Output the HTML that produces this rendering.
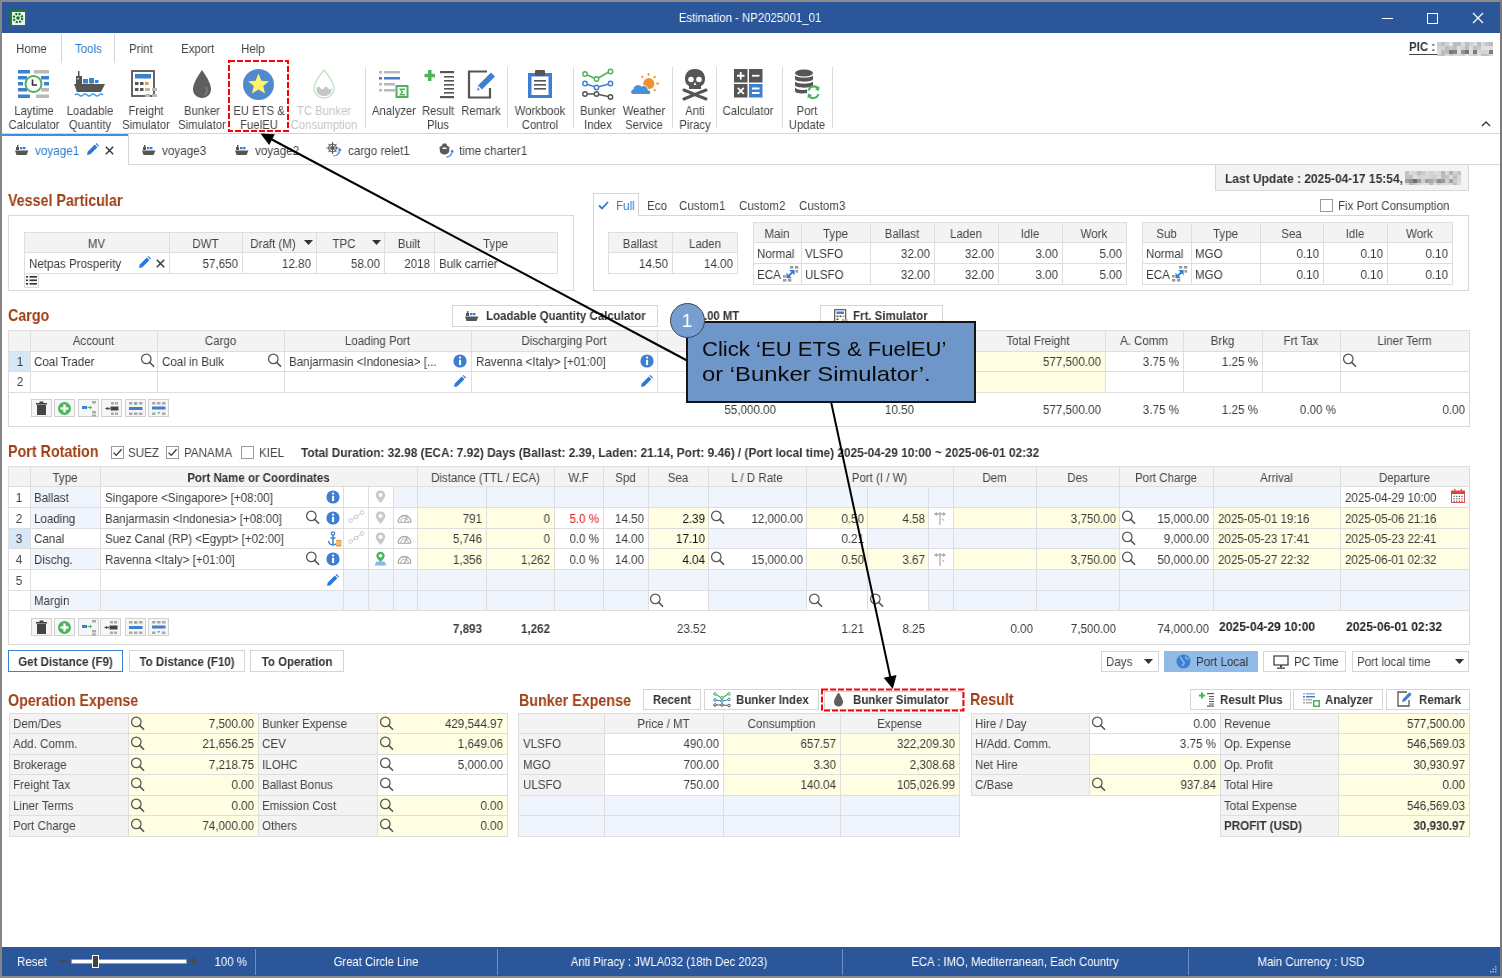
<!DOCTYPE html><html><head><meta charset="utf-8"><style>
html,body{margin:0;padding:0;width:1502px;height:978px;overflow:hidden;background:#fff;}
body{position:relative;font-family:"Liberation Sans", sans-serif;}
.a{position:absolute;}
.t{position:absolute;white-space:nowrap;will-change:transform;}
svg.a{overflow:visible;}
</style></head><body>
<div class="a" style="left:0px;top:0px;width:1502px;height:978px;background:#ffffff;"></div>
<div class="a" style="left:0px;top:0px;width:1502px;height:2px;background:#8c8c8c;"></div>
<div class="a" style="left:0px;top:0px;width:2px;height:978px;background:#858585;"></div>
<div class="a" style="left:1500px;top:0px;width:2px;height:978px;background:#7a7a7a;"></div>
<div class="a" style="left:0px;top:976px;width:1502px;height:2px;background:#8c8c8c;"></div>
<div class="a" style="left:2px;top:2px;width:1498px;height:31px;background:#2b579a;"></div>
<div class="a" style="left:10px;top:10px;width:16px;height:16px;background:#1f7a3a;border-radius:1px;"></div>
<div class="a" style="left:11.5px;top:11.5px;width:13px;height:13px;background:#e9f3ea;"></div>
<svg class="a" style="left:11px;top:11px;" width="14" height="14" viewBox="0 0 14 14"><circle cx="7" cy="7" r="4.2" fill="none" stroke="#146c2e" stroke-width="2.2" stroke-dasharray="2 1.3"/><circle cx="7" cy="7" r="1.8" fill="#146c2e"/></svg>
<div class="t" style="top:12.38px;font-size:12.54px;line-height:12.54px;color:#ffffff;left:600.0px;width:300px;text-align:center;transform-origin:50% 0;transform:scaleX(0.9091);">Estimation - NP2025001_01</div>
<div class="a" style="left:1382px;top:18px;width:11px;height:1px;background:#ffffff;"></div>
<div class="a" style="left:1427px;top:13px;width:11px;height:11px;border:1px solid #fff;box-sizing:border-box;"></div>
<svg class="a" style="left:1472px;top:12px;" width="12" height="12" viewBox="0 0 12 12"><path d="M1 1 L11 11 M11 1 L1 11" stroke="#fff" stroke-width="1.2"/></svg>
<div class="t" style="top:43.09px;font-size:12.65px;line-height:12.65px;color:#444;left:16px;transform-origin:0 0;transform:scaleX(0.9091);">Home</div>
<div class="a" style="left:61px;top:34px;width:1px;height:29px;background:#d6d6d6;"></div>
<div class="a" style="left:114px;top:34px;width:1px;height:29px;background:#d6d6d6;"></div>
<div class="t" style="top:43.09px;font-size:12.65px;line-height:12.65px;color:#2b7cd3;left:74.5px;transform-origin:0 0;transform:scaleX(0.9091);">Tools</div>
<div class="t" style="top:43.09px;font-size:12.65px;line-height:12.65px;color:#444;left:128.5px;transform-origin:0 0;transform:scaleX(0.9091);">Print</div>
<div class="t" style="top:43.09px;font-size:12.65px;line-height:12.65px;color:#444;left:180.5px;transform-origin:0 0;transform:scaleX(0.9091);">Export</div>
<div class="t" style="top:43.09px;font-size:12.65px;line-height:12.65px;color:#444;left:241px;transform-origin:0 0;transform:scaleX(0.9091);">Help</div>
<div class="t" style="top:41.29px;font-size:12.65px;line-height:12.65px;color:#333;font-weight:bold;left:1409px;transform-origin:0 0;transform:scaleX(0.9091);">PIC :</div>
<div class="a" style="left:1409px;top:54px;width:28px;height:1px;background:#444;"></div>
<svg class="a" style="left:1437px;top:42px;overflow:hidden;" width="56" height="14" viewBox="0 0 56 14"><rect x="0" y="0" width="4" height="4" fill="rgb(205,205,205)"/><rect x="4" y="0" width="4" height="4" fill="rgb(194,194,194)"/><rect x="8" y="0" width="4" height="4" fill="rgb(210,210,210)"/><rect x="12" y="0" width="4" height="4" fill="rgb(226,226,226)"/><rect x="16" y="0" width="4" height="4" fill="rgb(188,188,188)"/><rect x="20" y="0" width="4" height="4" fill="rgb(189,189,189)"/><rect x="24" y="0" width="4" height="4" fill="rgb(219,219,219)"/><rect x="28" y="0" width="4" height="4" fill="rgb(191,191,191)"/><rect x="32" y="0" width="4" height="4" fill="rgb(208,208,208)"/><rect x="36" y="0" width="4" height="4" fill="rgb(222,222,222)"/><rect x="40" y="0" width="4" height="4" fill="rgb(188,188,188)"/><rect x="44" y="0" width="4" height="4" fill="rgb(217,217,217)"/><rect x="48" y="0" width="4" height="4" fill="rgb(198,198,198)"/><rect x="52" y="0" width="4" height="4" fill="rgb(187,187,187)"/><rect x="56" y="0" width="4" height="4" fill="rgb(190,190,190)"/><rect x="0" y="4" width="4" height="4" fill="rgb(212,212,212)"/><rect x="4" y="4" width="4" height="4" fill="rgb(211,211,211)"/><rect x="8" y="4" width="4" height="4" fill="rgb(189,189,189)"/><rect x="12" y="4" width="4" height="4" fill="rgb(200,200,200)"/><rect x="16" y="4" width="4" height="4" fill="rgb(190,190,190)"/><rect x="20" y="4" width="4" height="4" fill="rgb(220,220,220)"/><rect x="24" y="4" width="4" height="4" fill="rgb(212,212,212)"/><rect x="28" y="4" width="4" height="4" fill="rgb(188,188,188)"/><rect x="32" y="4" width="4" height="4" fill="rgb(221,221,221)"/><rect x="36" y="4" width="4" height="4" fill="rgb(192,192,192)"/><rect x="40" y="4" width="4" height="4" fill="rgb(199,199,199)"/><rect x="44" y="4" width="4" height="4" fill="rgb(225,225,225)"/><rect x="48" y="4" width="4" height="4" fill="rgb(225,225,225)"/><rect x="52" y="4" width="4" height="4" fill="rgb(222,222,222)"/><rect x="56" y="4" width="4" height="4" fill="rgb(188,188,188)"/><rect x="0" y="8" width="4" height="4" fill="rgb(221,221,221)"/><rect x="4" y="8" width="4" height="4" fill="rgb(188,188,188)"/><rect x="8" y="8" width="4" height="4" fill="rgb(187,187,187)"/><rect x="12" y="8" width="4" height="4" fill="rgb(119,119,119)"/><rect x="16" y="8" width="4" height="4" fill="rgb(129,129,129)"/><rect x="20" y="8" width="4" height="4" fill="rgb(220,220,220)"/><rect x="24" y="8" width="4" height="4" fill="rgb(146,146,146)"/><rect x="28" y="8" width="4" height="4" fill="rgb(116,116,116)"/><rect x="32" y="8" width="4" height="4" fill="rgb(220,220,220)"/><rect x="36" y="8" width="4" height="4" fill="rgb(123,123,123)"/><rect x="40" y="8" width="4" height="4" fill="rgb(216,216,216)"/><rect x="44" y="8" width="4" height="4" fill="rgb(212,212,212)"/><rect x="48" y="8" width="4" height="4" fill="rgb(214,214,214)"/><rect x="52" y="8" width="4" height="4" fill="rgb(125,125,125)"/><rect x="56" y="8" width="4" height="4" fill="rgb(159,159,159)"/><rect x="0" y="12" width="4" height="4" fill="rgb(200,200,200)"/><rect x="4" y="12" width="4" height="4" fill="rgb(190,190,190)"/><rect x="8" y="12" width="4" height="4" fill="rgb(221,221,221)"/><rect x="12" y="12" width="4" height="4" fill="rgb(204,204,204)"/><rect x="16" y="12" width="4" height="4" fill="rgb(218,218,218)"/><rect x="20" y="12" width="4" height="4" fill="rgb(216,216,216)"/><rect x="24" y="12" width="4" height="4" fill="rgb(206,206,206)"/><rect x="28" y="12" width="4" height="4" fill="rgb(231,231,231)"/><rect x="32" y="12" width="4" height="4" fill="rgb(213,213,213)"/><rect x="36" y="12" width="4" height="4" fill="rgb(203,203,203)"/><rect x="40" y="12" width="4" height="4" fill="rgb(223,223,223)"/><rect x="44" y="12" width="4" height="4" fill="rgb(189,189,189)"/><rect x="48" y="12" width="4" height="4" fill="rgb(192,192,192)"/><rect x="52" y="12" width="4" height="4" fill="rgb(217,217,217)"/><rect x="56" y="12" width="4" height="4" fill="rgb(211,211,211)"/></svg>
<div class="a" style="left:2px;top:133px;width:1498px;height:1px;background:#d5d5d5;"></div>
<svg class="a" style="left:1481px;top:120px;" width="10" height="7" viewBox="0 0 10 7"><path d="M1 6 L5 2 L9 6" fill="none" stroke="#333" stroke-width="1.3"/></svg>
<div class="t" style="top:105.28px;font-size:12.43px;line-height:12.43px;color:#444;left:-16.5px;width:100px;text-align:center;transform-origin:50% 0;transform:scaleX(0.9091);">Laytime</div>
<div class="t" style="top:118.68px;font-size:12.43px;line-height:12.43px;color:#444;left:-16.5px;width:100px;text-align:center;transform-origin:50% 0;transform:scaleX(0.9091);">Calculator</div>
<div class="t" style="top:105.28px;font-size:12.43px;line-height:12.43px;color:#444;left:40.0px;width:100px;text-align:center;transform-origin:50% 0;transform:scaleX(0.9091);">Loadable</div>
<div class="t" style="top:118.68px;font-size:12.43px;line-height:12.43px;color:#444;left:40.0px;width:100px;text-align:center;transform-origin:50% 0;transform:scaleX(0.9091);">Quantity</div>
<div class="t" style="top:105.28px;font-size:12.43px;line-height:12.43px;color:#444;left:96.0px;width:100px;text-align:center;transform-origin:50% 0;transform:scaleX(0.9091);">Freight</div>
<div class="t" style="top:118.68px;font-size:12.43px;line-height:12.43px;color:#444;left:96.0px;width:100px;text-align:center;transform-origin:50% 0;transform:scaleX(0.9091);">Simulator</div>
<div class="t" style="top:105.28px;font-size:12.43px;line-height:12.43px;color:#444;left:152.0px;width:100px;text-align:center;transform-origin:50% 0;transform:scaleX(0.9091);">Bunker</div>
<div class="t" style="top:118.68px;font-size:12.43px;line-height:12.43px;color:#444;left:152.0px;width:100px;text-align:center;transform-origin:50% 0;transform:scaleX(0.9091);">Simulator</div>
<div class="t" style="top:105.28px;font-size:12.43px;line-height:12.43px;color:#444;left:208.5px;width:100px;text-align:center;transform-origin:50% 0;transform:scaleX(0.9091);">EU ETS &amp;</div>
<div class="t" style="top:118.68px;font-size:12.43px;line-height:12.43px;color:#444;left:208.5px;width:100px;text-align:center;transform-origin:50% 0;transform:scaleX(0.9091);">FuelEU</div>
<div class="t" style="top:105.28px;font-size:12.43px;line-height:12.43px;color:#c4c4c4;left:274.0px;width:100px;text-align:center;transform-origin:50% 0;transform:scaleX(0.9091);">TC Bunker</div>
<div class="t" style="top:118.68px;font-size:12.43px;line-height:12.43px;color:#c4c4c4;left:274.0px;width:100px;text-align:center;transform-origin:50% 0;transform:scaleX(0.9091);">Consumption</div>
<div class="t" style="top:105.28px;font-size:12.43px;line-height:12.43px;color:#444;left:344.0px;width:100px;text-align:center;transform-origin:50% 0;transform:scaleX(0.9091);">Analyzer</div>
<div class="t" style="top:105.28px;font-size:12.43px;line-height:12.43px;color:#444;left:388.0px;width:100px;text-align:center;transform-origin:50% 0;transform:scaleX(0.9091);">Result</div>
<div class="t" style="top:118.68px;font-size:12.43px;line-height:12.43px;color:#444;left:388.0px;width:100px;text-align:center;transform-origin:50% 0;transform:scaleX(0.9091);">Plus</div>
<div class="t" style="top:105.28px;font-size:12.43px;line-height:12.43px;color:#444;left:431.0px;width:100px;text-align:center;transform-origin:50% 0;transform:scaleX(0.9091);">Remark</div>
<div class="t" style="top:105.28px;font-size:12.43px;line-height:12.43px;color:#444;left:489.5px;width:100px;text-align:center;transform-origin:50% 0;transform:scaleX(0.9091);">Workbook</div>
<div class="t" style="top:118.68px;font-size:12.43px;line-height:12.43px;color:#444;left:489.5px;width:100px;text-align:center;transform-origin:50% 0;transform:scaleX(0.9091);">Control</div>
<div class="t" style="top:105.28px;font-size:12.43px;line-height:12.43px;color:#444;left:547.5px;width:100px;text-align:center;transform-origin:50% 0;transform:scaleX(0.9091);">Bunker</div>
<div class="t" style="top:118.68px;font-size:12.43px;line-height:12.43px;color:#444;left:547.5px;width:100px;text-align:center;transform-origin:50% 0;transform:scaleX(0.9091);">Index</div>
<div class="t" style="top:105.28px;font-size:12.43px;line-height:12.43px;color:#444;left:594.0px;width:100px;text-align:center;transform-origin:50% 0;transform:scaleX(0.9091);">Weather</div>
<div class="t" style="top:118.68px;font-size:12.43px;line-height:12.43px;color:#444;left:594.0px;width:100px;text-align:center;transform-origin:50% 0;transform:scaleX(0.9091);">Service</div>
<div class="t" style="top:105.28px;font-size:12.43px;line-height:12.43px;color:#444;left:644.5px;width:100px;text-align:center;transform-origin:50% 0;transform:scaleX(0.9091);">Anti</div>
<div class="t" style="top:118.68px;font-size:12.43px;line-height:12.43px;color:#444;left:644.5px;width:100px;text-align:center;transform-origin:50% 0;transform:scaleX(0.9091);">Piracy</div>
<div class="t" style="top:105.28px;font-size:12.43px;line-height:12.43px;color:#444;left:698.0px;width:100px;text-align:center;transform-origin:50% 0;transform:scaleX(0.9091);">Calculator</div>
<div class="t" style="top:105.28px;font-size:12.43px;line-height:12.43px;color:#444;left:757.0px;width:100px;text-align:center;transform-origin:50% 0;transform:scaleX(0.9091);">Port</div>
<div class="t" style="top:118.68px;font-size:12.43px;line-height:12.43px;color:#444;left:757.0px;width:100px;text-align:center;transform-origin:50% 0;transform:scaleX(0.9091);">Update</div>
<div class="a" style="left:365px;top:67px;width:1px;height:61px;background:#dcdcdc;"></div>
<div class="a" style="left:506.5px;top:67px;width:1px;height:61px;background:#dcdcdc;"></div>
<div class="a" style="left:573px;top:67px;width:1px;height:61px;background:#dcdcdc;"></div>
<div class="a" style="left:672px;top:67px;width:1px;height:61px;background:#dcdcdc;"></div>
<div class="a" style="left:716px;top:67px;width:1px;height:61px;background:#dcdcdc;"></div>
<div class="a" style="left:781.5px;top:67px;width:1px;height:61px;background:#dcdcdc;"></div>
<div class="a" style="left:832px;top:67px;width:1px;height:61px;background:#dcdcdc;"></div>
<svg class="a" style="left:17px;top:69px;" width="33" height="30" viewBox="0 0 33 30"><rect x="1" y="1" width="12" height="3.5" fill="#3d7fd0"/><rect x="17" y="1" width="15" height="3.5" fill="#b9b9b9"/>
    <rect x="1" y="7" width="9" height="3.5" fill="#3d7fd0"/><rect x="24" y="7" width="8" height="3.5" fill="#3d7fd0"/>
    <rect x="1" y="13" width="5" height="3.5" fill="#3d7fd0"/><rect x="27" y="13" width="5" height="3.5" fill="#3d7fd0"/>
    <rect x="1" y="19" width="9" height="3.5" fill="#3d7fd0"/><rect x="24" y="19" width="8" height="3.5" fill="#b9b9b9"/>
    <rect x="1" y="25.5" width="12" height="3.5" fill="#3d7fd0"/><rect x="19" y="25.5" width="13" height="3.5" fill="#b9b9b9"/>
    <circle cx="16.5" cy="15" r="8" fill="#fff" stroke="#4cb35a" stroke-width="2"/><path d="M15.5 10.5 L15.5 16 L20 16" fill="none" stroke="#333" stroke-width="1.6"/></svg>
<svg class="a" style="left:74px;top:70px;" width="32" height="28" viewBox="0 0 32 28"><rect x="4" y="1" width="1.5" height="5" fill="#555"/><rect x="2" y="6" width="6" height="8" fill="#555"/><rect x="3.5" y="8" width="1.2" height="1.5" fill="#fff"/>
    <rect x="9" y="9" width="5" height="4.5" fill="#3d7fd0"/><rect x="15" y="8" width="5" height="5.5" fill="#3d7fd0"/><rect x="21" y="10" width="3.5" height="3" fill="#3d7fd0"/>
    <path d="M0 14 L31 14 L27 22 L3 22 Z" fill="#555"/>
    <path d="M1 25 q2 -2 4 0 t4 0 t4 0 t4 0 t4 0 t4 0 t4 0" fill="none" stroke="#3d9be0" stroke-width="1.3"/></svg>
<svg class="a" style="left:131px;top:70px;" width="30" height="29" viewBox="0 0 30 29"><rect x="1" y="1" width="22" height="25" fill="#fff" stroke="#555" stroke-width="1.8"/><rect x="4" y="4" width="16" height="4.5" fill="#3d7fd0"/>
    <rect x="4" y="12" width="3.5" height="3" fill="#555"/><rect x="9" y="12" width="3.5" height="3" fill="#555"/><rect x="14" y="12" width="3.5" height="3" fill="#f0922e"/>
    <rect x="4" y="18" width="3.5" height="3" fill="#555"/><rect x="9" y="18" width="3.5" height="3" fill="#555"/>
    <rect x="14" y="18" width="5" height="3" fill="#b9b9b9"/><rect x="21" y="18" width="5" height="3" fill="#b9b9b9"/><rect x="14" y="24" width="5" height="3" fill="#b9b9b9"/><rect x="21" y="24" width="5" height="3" fill="#b9b9b9"/></svg>
<svg class="a" style="left:191px;top:69px;" width="22" height="30" viewBox="0 0 22 30"><path d="M11 1 C11 1 2 13 2 20 C2 25.5 6 29 11 29 C16 29 20 25.5 20 20 C20 13 11 1 11 1 Z" fill="#5f5f5f"/><path d="M15.5 18 C16.5 21 16 24 13.5 26" fill="none" stroke="#8a8a8a" stroke-width="1.2"/></svg>
<svg class="a" style="left:242px;top:68px;" width="33" height="33" viewBox="0 0 33 33"><circle cx="16.5" cy="16.5" r="15.5" fill="#5089cf"/><path d="M16.5 5.5 L19.4 12.7 L27 13.2 L21.2 18.1 L23.1 25.6 L16.5 21.4 L9.9 25.6 L11.8 18.1 L6 13.2 L13.6 12.7 Z" fill="#fff36a"/></svg>
<svg class="a" style="left:312px;top:69px;" width="24" height="30" viewBox="0 0 24 30"><path d="M12 1 C12 1 2 13 2 19.5 C2 25 6.5 29 12 29 C17.5 29 22 25 22 19.5 C22 13 12 1 12 1 Z" fill="#fff" stroke="#bfe3c3" stroke-width="1.3"/><path d="M4.5 19 q2 -2.5 3.8 0 t3.8 0 t3.8 0 t3.8 0 L19.5 22 C18.5 25.5 15.5 27 12 27 C8.5 27 5.5 25.5 4.5 22 Z" fill="#c6c6c6"/></svg>
<svg class="a" style="left:378px;top:70px;" width="32" height="29" viewBox="0 0 32 29"><rect x="1" y="1" width="3" height="2.5" fill="#b9b9b9"/><rect x="6" y="1" width="16" height="2.5" fill="#b9b9b9"/>
    <rect x="1" y="7" width="3" height="2.5" fill="#3d7fd0"/><rect x="6" y="7" width="16" height="2.5" fill="#3d7fd0"/>
    <rect x="1" y="13" width="3" height="2.5" fill="#b9b9b9"/><rect x="6" y="13" width="11" height="2.5" fill="#b9b9b9"/>
    <rect x="1" y="19" width="3" height="2.5" fill="#b9b9b9"/><rect x="6" y="19" width="11" height="2.5" fill="#b9b9b9"/>
    <rect x="17.5" y="15" width="13" height="13" fill="#4cb35a"/><rect x="19.5" y="17" width="9" height="9" fill="#fff"/><path d="M21 18.5 L27 18.5 L27 20 L23.5 20 L25.5 22 L23.5 24 L27 24 L27 25.5 L21 25.5 L23.5 22 Z" fill="#4cb35a"/></svg>
<svg class="a" style="left:424px;top:70px;" width="31" height="28" viewBox="0 0 31 28"><rect x="4" y="0" width="3.5" height="11" fill="#4cb35a"/><rect x="0.5" y="3.8" width="10.5" height="3.5" fill="#4cb35a"/>
    <rect x="16" y="1" width="14" height="2.2" fill="#555"/><rect x="20" y="6" width="10" height="1.6" fill="#555"/><rect x="20" y="10" width="10" height="1.6" fill="#555"/>
    <rect x="20" y="14" width="10" height="1.6" fill="#555"/><rect x="20" y="18" width="10" height="1.6" fill="#555"/><rect x="20" y="22" width="10" height="1.6" fill="#555"/><rect x="16" y="26" width="14" height="2.2" fill="#555"/></svg>
<svg class="a" style="left:467px;top:70px;" width="30" height="29" viewBox="0 0 30 29"><path d="M20 1.5 L2 1.5 L2 27.5 L23 27.5 L23 18" fill="none" stroke="#555" stroke-width="2.2"/><path d="M9.5 21 L11 15.5 L24 2.5 L28 6.5 L15 19.5 Z" fill="#3d7fd0"/><path d="M9.5 21 L11 15.5 L15 19.5 Z" fill="#fff"/><path d="M10.2 20.2 L11 17.6 L12.8 19.4 Z" fill="#3d7fd0"/></svg>
<svg class="a" style="left:526px;top:69px;" width="28" height="30" viewBox="0 0 28 30"><rect x="2" y="4" width="24" height="25" fill="#3d7fd0"/><rect x="5.5" y="7.5" width="17" height="18.5" fill="#fff"/><rect x="9" y="1" width="10" height="6" rx="1" fill="#555"/><rect x="8" y="11" width="12" height="1.6" fill="#555"/><rect x="8" y="15" width="12" height="1.6" fill="#555"/><rect x="8" y="19" width="12" height="1.6" fill="#555"/></svg>
<svg class="a" style="left:581px;top:69px;" width="34" height="31" viewBox="0 0 34 31"><polyline points="4,5 15.5,10 29.5,2" fill="none" stroke="#4cb35a" stroke-width="1.6"/><circle cx="4" cy="5" r="2.2" fill="#fff" stroke="#4cb35a" stroke-width="1.4"/><circle cx="15.5" cy="10" r="2.2" fill="#fff" stroke="#4cb35a" stroke-width="1.4"/><circle cx="29.5" cy="2.5" r="2.2" fill="#fff" stroke="#4cb35a" stroke-width="1.4"/>
    <polyline points="4,14.5 15.5,18.5 29.5,14.5" fill="none" stroke="#3d7fd0" stroke-width="1.6"/><circle cx="4" cy="14.5" r="2.2" fill="#fff" stroke="#3d7fd0" stroke-width="1.4"/><circle cx="15.5" cy="18.5" r="2.2" fill="#fff" stroke="#3d7fd0" stroke-width="1.4"/><circle cx="29.5" cy="14.5" r="2.2" fill="#fff" stroke="#3d7fd0" stroke-width="1.4"/>
    <polyline points="4,25 15.5,25 29.5,28" fill="none" stroke="#555" stroke-width="1.6"/><circle cx="4" cy="25" r="2.2" fill="#fff" stroke="#555" stroke-width="1.4"/><circle cx="15.5" cy="25" r="2.2" fill="#fff" stroke="#555" stroke-width="1.4"/><circle cx="29.5" cy="28" r="2.2" fill="#fff" stroke="#555" stroke-width="1.4"/></svg>
<svg class="a" style="left:629px;top:71px;" width="31" height="25" viewBox="0 0 31 25"><circle cx="19.8" cy="12.6" r="5.6" fill="#f0922e"/><g stroke="#f0922e" stroke-width="1.7"><line x1="19.5" y1="2" x2="19.5" y2="4.8"/><line x1="26.5" y1="5" x2="24.8" y2="6.8"/><line x1="30" y1="12.6" x2="27.2" y2="12.6"/><line x1="26.5" y1="20" x2="24.8" y2="18.2"/><line x1="12.5" y1="5" x2="14.2" y2="6.8"/></g>
    <path d="M4 23.5 C1 23.5 0.8 18.5 4 18.2 C4.2 14 10 12.2 12.5 15.2 C14.5 13.8 19 15 19 18.8 C22.5 19 22.5 23.5 19.5 23.5 Z" fill="#4a8fd6" stroke="#fff" stroke-width="1"/></svg>
<svg class="a" style="left:681px;top:68px;" width="28" height="32" viewBox="0 0 28 32"><path d="M14 1 C6.5 1 4 6 4 11 C4 15 6 17 8 18 L8 21 L20 21 L20 18 C22 17 24 15 24 11 C24 6 21.5 1 14 1 Z" fill="#555"/>
    <circle cx="10" cy="11.5" r="2.8" fill="#fff"/><circle cx="18" cy="11.5" r="2.8" fill="#fff"/><path d="M14 14 L12.6 17 L15.4 17 Z" fill="#fff"/>
    <path d="M3 22 L25 31 M25 22 L3 31" stroke="#555" stroke-width="3" stroke-linecap="round"/></svg>
<svg class="a" style="left:734px;top:69px;" width="29" height="29" viewBox="0 0 29 29"><rect x="0" y="0" width="13.5" height="13.5" fill="#555"/><rect x="15" y="0" width="13.5" height="13.5" fill="#555"/><rect x="0" y="15" width="13.5" height="13.5" fill="#555"/><rect x="15" y="15" width="13.5" height="13.5" fill="#3d7fd0"/>
    <path d="M3 6.75 L10.5 6.75 M6.75 3 L6.75 10.5" stroke="#fff" stroke-width="1.8"/><path d="M18 6.75 L25.5 6.75" stroke="#fff" stroke-width="1.8"/>
    <path d="M3.8 18.8 L9.8 24.8 M9.8 18.8 L3.8 24.8" stroke="#fff" stroke-width="1.8"/><path d="M18 19.5 L25.5 19.5 M18 24 L25.5 24" stroke="#fff" stroke-width="1.8"/></svg>
<svg class="a" style="left:793px;top:69px;" width="28" height="32" viewBox="0 0 28 32"><ellipse cx="11" cy="4" rx="9" ry="3.5" fill="#555"/><path d="M2 6 C2 9.5 20 9.5 20 6 L20 10 C20 13.5 2 13.5 2 10 Z" fill="#555"/><path d="M2 12 C2 15.5 20 15.5 20 12 L20 16 C20 19.5 2 19.5 2 16 Z" fill="#555"/><path d="M2 18 C2 21.5 14 21.5 14 20 L14 24 C10 25 2 24.5 2 22 Z" fill="#555"/>
    <path d="M15.5 21.5 A5.5 5.5 0 0 1 25.5 20" fill="none" stroke="#4cb35a" stroke-width="2"/><path d="M26.5 17 L26 22 L22 20.5 Z" fill="#4cb35a"/><path d="M25.5 25 A5.5 5.5 0 0 1 15.5 26.5" fill="none" stroke="#4cb35a" stroke-width="2"/><path d="M14.5 29.5 L15 24.5 L19 26 Z" fill="#4cb35a"/></svg>
<svg class="a" style="left:0px;top:0px;" width="300" height="140" viewBox="0 0 300 140"><rect x="229" y="61" width="59" height="70" fill="none" stroke="#ff0000" stroke-width="2" stroke-dasharray="6 2"/></svg>
<div class="a" style="left:2px;top:134px;width:126px;height:2px;background:#3d8ee6;"></div>
<div class="a" style="left:128px;top:134px;width:1px;height:31px;background:#d5d5d5;"></div>
<div class="a" style="left:128px;top:164px;width:1372px;height:1px;background:#d5d5d5;"></div>
<svg class="a" style="left:15px;top:145px;" width="14" height="11" viewBox="0 0 14 11"><rect x="2" y="0" width="1.4" height="4" fill="#555"/><rect x="1" y="2" width="3" height="3" fill="#555"/><rect x="5" y="2" width="2.5" height="2.2" fill="#3d7fd0"/><rect x="8" y="2" width="2.5" height="2.2" fill="#3d7fd0"/><path d="M0 5.5 L13.5 5.5 L11.5 10 L1.5 10 Z" fill="#555"/></svg>
<div class="t" style="top:144.81px;font-size:12.87px;line-height:12.87px;color:#2b7cd3;left:35px;transform-origin:0 0;transform:scaleX(0.9091);">voyage1</div>
<svg class="a" style="left:86px;top:143px;" width="13" height="13" viewBox="0 0 13 13"><path d="M1 12 L1.8 8.6 L8.8 1.6 L11.4 4.2 L4.4 11.2 Z" fill="#2a78d8"/><path d="M9.6 0.8 L10.4 0 L13 2.6 L12.2 3.4 Z" fill="#2a78d8"/></svg>
<svg class="a" style="left:105px;top:146px;" width="9" height="9" viewBox="0 0 9 9"><path d="M0.8 0.8 L8.2 8.2 M8.2 0.8 L0.8 8.2" stroke="#333" stroke-width="1.4"/></svg>
<svg class="a" style="left:142px;top:145px;" width="14" height="11" viewBox="0 0 14 11"><rect x="2" y="0" width="1.4" height="4" fill="#555"/><rect x="1" y="2" width="3" height="3" fill="#555"/><rect x="5" y="2" width="2.5" height="2.2" fill="#3d7fd0"/><rect x="8" y="2" width="2.5" height="2.2" fill="#3d7fd0"/><path d="M0 5.5 L13.5 5.5 L11.5 10 L1.5 10 Z" fill="#555"/></svg>
<div class="t" style="top:144.81px;font-size:12.87px;line-height:12.87px;color:#444;left:162px;transform-origin:0 0;transform:scaleX(0.9091);">voyage3</div>
<svg class="a" style="left:234.5px;top:145px;" width="14" height="11" viewBox="0 0 14 11"><rect x="2" y="0" width="1.4" height="4" fill="#555"/><rect x="1" y="2" width="3" height="3" fill="#555"/><rect x="5" y="2" width="2.5" height="2.2" fill="#3d7fd0"/><rect x="8" y="2" width="2.5" height="2.2" fill="#3d7fd0"/><path d="M0 5.5 L13.5 5.5 L11.5 10 L1.5 10 Z" fill="#555"/></svg>
<div class="t" style="top:144.81px;font-size:12.87px;line-height:12.87px;color:#444;left:254.5px;transform-origin:0 0;transform:scaleX(0.9091);">voyage2</div>
<svg class="a" style="left:326px;top:141px;" width="16" height="16" viewBox="0 0 16 16"><g stroke="#555" stroke-width="1" fill="none"><circle cx="6.5" cy="7" r="4"/><circle cx="6.5" cy="7" r="1.5"/><path d="M6.5 1 L6.5 13 M0.5 7 L12.5 7 M2.3 2.8 L10.7 11.2 M10.7 2.8 L2.3 11.2"/></g><path d="M7 14.5 C10 14.5 12.5 12.5 13 9.5 L11.2 9.8 L14 6.8 L15.8 10 L14.3 9.8 C13.8 13.5 11 15.5 7 15.5 Z" fill="#3d8ee6"/></svg>
<div class="t" style="top:144.81px;font-size:12.87px;line-height:12.87px;color:#444;left:348.2px;transform-origin:0 0;transform:scaleX(0.9091);">cargo relet1</div>
<svg class="a" style="left:438px;top:142px;" width="16" height="16" viewBox="0 0 16 16"><path d="M3.5 4 L5 1.5 L8 1.5 L9.5 4 L11.5 5 L11 10 C10 12 7.5 12.5 6.5 12.5 C5.5 12.5 3 12 2 10 L1.5 5 Z" fill="#5a5a5a"/><rect x="4.5" y="5.5" width="4" height="1.5" fill="#fff"/><path d="M8 14.5 C11 14.5 13 12.5 13.5 10 L11.8 10.2 L14.5 7.3 L16 10.5 L14.6 10.3 C14.2 13.8 11.5 15.6 8 15.6 Z" fill="#3d8ee6"/></svg>
<div class="t" style="top:144.81px;font-size:12.87px;line-height:12.87px;color:#444;left:459.3px;transform-origin:0 0;transform:scaleX(0.9091);">time charter1</div>
<div class="t" style="top:192.68px;font-size:15.73px;line-height:15.73px;color:#9e4015;font-weight:bold;left:8px;transform-origin:0 0;transform:scaleX(0.9091);">Vessel Particular</div>
<div class="a" style="left:8px;top:215px;width:566px;height:76px;border:1px solid #dadada;box-sizing:border-box;"></div>
<div class="a" style="left:24px;top:232px;width:533px;height:20px;background:#f3f3f3;"></div>
<div class="a" style="left:24px;top:232px;width:534px;height:1px;background:#dedede;"></div>
<div class="a" style="left:24px;top:252px;width:534px;height:1px;background:#dedede;"></div>
<div class="a" style="left:24px;top:273px;width:534px;height:1px;background:#dedede;"></div>
<div class="a" style="left:24px;top:232px;width:1px;height:42px;background:#dedede;"></div>
<div class="a" style="left:169px;top:232px;width:1px;height:42px;background:#dedede;"></div>
<div class="a" style="left:242px;top:232px;width:1px;height:42px;background:#dedede;"></div>
<div class="a" style="left:316px;top:232px;width:1px;height:42px;background:#dedede;"></div>
<div class="a" style="left:384px;top:232px;width:1px;height:42px;background:#dedede;"></div>
<div class="a" style="left:434px;top:232px;width:1px;height:42px;background:#dedede;"></div>
<div class="a" style="left:557px;top:232px;width:1px;height:42px;background:#dedede;"></div>
<div class="t" style="top:237.69px;font-size:12.65px;line-height:12.65px;color:#444;left:24.0px;width:145px;text-align:center;transform-origin:50% 0;transform:scaleX(0.9091);">MV</div>
<div class="t" style="top:237.69px;font-size:12.65px;line-height:12.65px;color:#444;left:169.0px;width:73px;text-align:center;transform-origin:50% 0;transform:scaleX(0.9091);">DWT</div>
<div class="t" style="top:237.69px;font-size:12.65px;line-height:12.65px;color:#444;left:236.0px;width:74px;text-align:center;transform-origin:50% 0;transform:scaleX(0.9091);">Draft (M)</div>
<div class="t" style="top:237.69px;font-size:12.65px;line-height:12.65px;color:#444;left:310.0px;width:68px;text-align:center;transform-origin:50% 0;transform:scaleX(0.9091);">TPC</div>
<div class="t" style="top:237.69px;font-size:12.65px;line-height:12.65px;color:#444;left:384.0px;width:50px;text-align:center;transform-origin:50% 0;transform:scaleX(0.9091);">Built</div>
<div class="t" style="top:237.69px;font-size:12.65px;line-height:12.65px;color:#444;left:434.0px;width:123px;text-align:center;transform-origin:50% 0;transform:scaleX(0.9091);">Type</div>
<svg class="a" style="left:304px;top:240px;" width="9" height="5" viewBox="0 0 9 5"><path d="M0 0 L9 0 L4.5 5 Z" fill="#333"/></svg>
<svg class="a" style="left:372px;top:240px;" width="9" height="5" viewBox="0 0 9 5"><path d="M0 0 L9 0 L4.5 5 Z" fill="#333"/></svg>
<div class="t" style="top:258.10px;font-size:12.76px;line-height:12.76px;color:#3a3a3a;left:29px;transform-origin:0 0;transform:scaleX(0.9091);">Netpas Prosperity</div>
<svg class="a" style="left:138px;top:256px;" width="13" height="13" viewBox="0 0 13 13"><path d="M1 12 L1.8 8.6 L8.8 1.6 L11.4 4.2 L4.4 11.2 Z" fill="#2a78d8"/><path d="M9.6 0.8 L10.4 0 L13 2.6 L12.2 3.4 Z" fill="#2a78d8"/></svg>
<svg class="a" style="left:156px;top:259px;" width="9" height="9" viewBox="0 0 9 9"><path d="M0.8 0.8 L8.2 8.2 M8.2 0.8 L0.8 8.2" stroke="#333" stroke-width="1.4"/></svg>
<div class="t" style="top:258.10px;font-size:12.76px;line-height:12.76px;color:#3a3a3a;left:-162px;width:400px;text-align:right;transform-origin:100% 0;transform:scaleX(0.9091);">57,650</div>
<div class="t" style="top:258.10px;font-size:12.76px;line-height:12.76px;color:#3a3a3a;left:-89px;width:400px;text-align:right;transform-origin:100% 0;transform:scaleX(0.9091);">12.80</div>
<div class="t" style="top:258.10px;font-size:12.76px;line-height:12.76px;color:#3a3a3a;left:-20px;width:400px;text-align:right;transform-origin:100% 0;transform:scaleX(0.9091);">58.00</div>
<div class="t" style="top:258.10px;font-size:12.76px;line-height:12.76px;color:#3a3a3a;left:30px;width:400px;text-align:right;transform-origin:100% 0;transform:scaleX(0.9091);">2018</div>
<div class="t" style="top:258.10px;font-size:12.76px;line-height:12.76px;color:#3a3a3a;left:439px;transform-origin:0 0;transform:scaleX(0.9091);">Bulk carrier</div>
<div class="a" style="left:24px;top:273px;width:15px;height:15px;background:#f7f7f7;border:1px solid #dcdcdc;box-sizing:border-box;"></div>
<svg class="a" style="left:25px;top:275px;" width="13" height="11" viewBox="0 0 13 11"><g fill="#333"><rect x="1" y="1" width="2" height="1.6"/><rect x="4.5" y="1" width="7.5" height="1.6"/><rect x="1" y="4.5" width="2" height="1.6"/><rect x="4.5" y="4.5" width="7.5" height="1.6"/><rect x="1" y="8" width="2" height="1.6"/><rect x="4.5" y="8" width="7.5" height="1.6"/></g></svg>
<div class="a" style="left:593px;top:193px;width:46px;height:23px;background:#fff;border:1px solid #d5d5d5;border-bottom:none;box-sizing:border-box;"></div>
<div class="a" style="left:639px;top:215px;width:830px;height:1px;background:#d5d5d5;"></div>
<div class="a" style="left:593px;top:215px;width:876px;height:76px;border:1px solid #d5d5d5;box-sizing:border-box;border-top:none;"></div>
<svg class="a" style="left:598px;top:201px;" width="11" height="9" viewBox="0 0 11 9"><path d="M1 4.5 L4 7.5 L10 1" fill="none" stroke="#2b7cd3" stroke-width="1.8"/></svg>
<div class="t" style="top:200.20px;font-size:12.76px;line-height:12.76px;color:#2b7cd3;left:616px;transform-origin:0 0;transform:scaleX(0.9091);">Full</div>
<div class="t" style="top:200.20px;font-size:12.76px;line-height:12.76px;color:#444;left:646.5px;transform-origin:0 0;transform:scaleX(0.9091);">Eco</div>
<div class="t" style="top:200.20px;font-size:12.76px;line-height:12.76px;color:#444;left:679px;transform-origin:0 0;transform:scaleX(0.9091);">Custom1</div>
<div class="t" style="top:200.20px;font-size:12.76px;line-height:12.76px;color:#444;left:738.5px;transform-origin:0 0;transform:scaleX(0.9091);">Custom2</div>
<div class="t" style="top:200.20px;font-size:12.76px;line-height:12.76px;color:#444;left:798.5px;transform-origin:0 0;transform:scaleX(0.9091);">Custom3</div>
<div class="a" style="left:608px;top:232px;width:129px;height:20px;background:#f3f3f3;"></div>
<div class="a" style="left:608px;top:232px;width:130px;height:1px;background:#dedede;"></div>
<div class="a" style="left:608px;top:252px;width:130px;height:1px;background:#dedede;"></div>
<div class="a" style="left:608px;top:273px;width:130px;height:1px;background:#dedede;"></div>
<div class="a" style="left:608px;top:232px;width:1px;height:42px;background:#dedede;"></div>
<div class="a" style="left:672px;top:232px;width:1px;height:42px;background:#dedede;"></div>
<div class="a" style="left:737px;top:232px;width:1px;height:42px;background:#dedede;"></div>
<div class="t" style="top:237.69px;font-size:12.65px;line-height:12.65px;color:#444;left:608.0px;width:64px;text-align:center;transform-origin:50% 0;transform:scaleX(0.9091);">Ballast</div>
<div class="t" style="top:237.69px;font-size:12.65px;line-height:12.65px;color:#444;left:672.5px;width:64px;text-align:center;transform-origin:50% 0;transform:scaleX(0.9091);">Laden</div>
<div class="t" style="top:258.10px;font-size:12.76px;line-height:12.76px;color:#3a3a3a;left:268px;width:400px;text-align:right;transform-origin:100% 0;transform:scaleX(0.9091);">14.50</div>
<div class="t" style="top:258.10px;font-size:12.76px;line-height:12.76px;color:#3a3a3a;left:333px;width:400px;text-align:right;transform-origin:100% 0;transform:scaleX(0.9091);">14.00</div>
<div class="a" style="left:753px;top:222px;width:373px;height:20px;background:#f3f3f3;"></div>
<div class="a" style="left:753px;top:222px;width:374px;height:1px;background:#dedede;"></div>
<div class="a" style="left:753px;top:242px;width:374px;height:1px;background:#dedede;"></div>
<div class="a" style="left:753px;top:263px;width:374px;height:1px;background:#dedede;"></div>
<div class="a" style="left:753px;top:284px;width:374px;height:1px;background:#dedede;"></div>
<div class="a" style="left:753px;top:222px;width:1px;height:63px;background:#dedede;"></div>
<div class="a" style="left:801px;top:222px;width:1px;height:63px;background:#dedede;"></div>
<div class="a" style="left:870px;top:222px;width:1px;height:63px;background:#dedede;"></div>
<div class="a" style="left:934px;top:222px;width:1px;height:63px;background:#dedede;"></div>
<div class="a" style="left:998px;top:222px;width:1px;height:63px;background:#dedede;"></div>
<div class="a" style="left:1062px;top:222px;width:1px;height:63px;background:#dedede;"></div>
<div class="a" style="left:1126px;top:222px;width:1px;height:63px;background:#dedede;"></div>
<div class="t" style="top:227.69px;font-size:12.65px;line-height:12.65px;color:#444;left:753.0px;width:48px;text-align:center;transform-origin:50% 0;transform:scaleX(0.9091);">Main</div>
<div class="t" style="top:227.69px;font-size:12.65px;line-height:12.65px;color:#444;left:801.0px;width:69px;text-align:center;transform-origin:50% 0;transform:scaleX(0.9091);">Type</div>
<div class="t" style="top:227.69px;font-size:12.65px;line-height:12.65px;color:#444;left:870.0px;width:64px;text-align:center;transform-origin:50% 0;transform:scaleX(0.9091);">Ballast</div>
<div class="t" style="top:227.69px;font-size:12.65px;line-height:12.65px;color:#444;left:934.0px;width:64px;text-align:center;transform-origin:50% 0;transform:scaleX(0.9091);">Laden</div>
<div class="t" style="top:227.69px;font-size:12.65px;line-height:12.65px;color:#444;left:998.0px;width:64px;text-align:center;transform-origin:50% 0;transform:scaleX(0.9091);">Idle</div>
<div class="t" style="top:227.69px;font-size:12.65px;line-height:12.65px;color:#444;left:1062.0px;width:64px;text-align:center;transform-origin:50% 0;transform:scaleX(0.9091);">Work</div>
<div class="t" style="top:248.10px;font-size:12.76px;line-height:12.76px;color:#3a3a3a;left:757px;transform-origin:0 0;transform:scaleX(0.9091);">Normal</div>
<div class="t" style="top:248.10px;font-size:12.76px;line-height:12.76px;color:#3a3a3a;left:805px;transform-origin:0 0;transform:scaleX(0.9091);">VLSFO</div>
<div class="t" style="top:248.10px;font-size:12.76px;line-height:12.76px;color:#3a3a3a;left:530px;width:400px;text-align:right;transform-origin:100% 0;transform:scaleX(0.9091);">32.00</div>
<div class="t" style="top:248.10px;font-size:12.76px;line-height:12.76px;color:#3a3a3a;left:594px;width:400px;text-align:right;transform-origin:100% 0;transform:scaleX(0.9091);">32.00</div>
<div class="t" style="top:248.10px;font-size:12.76px;line-height:12.76px;color:#3a3a3a;left:658px;width:400px;text-align:right;transform-origin:100% 0;transform:scaleX(0.9091);">3.00</div>
<div class="t" style="top:248.10px;font-size:12.76px;line-height:12.76px;color:#3a3a3a;left:722px;width:400px;text-align:right;transform-origin:100% 0;transform:scaleX(0.9091);">5.00</div>
<div class="t" style="top:269.10px;font-size:12.76px;line-height:12.76px;color:#3a3a3a;left:757px;transform-origin:0 0;transform:scaleX(0.9091);">ECA</div>
<div class="t" style="top:269.10px;font-size:12.76px;line-height:12.76px;color:#3a3a3a;left:805px;transform-origin:0 0;transform:scaleX(0.9091);">ULSFO</div>
<div class="t" style="top:269.10px;font-size:12.76px;line-height:12.76px;color:#3a3a3a;left:530px;width:400px;text-align:right;transform-origin:100% 0;transform:scaleX(0.9091);">32.00</div>
<div class="t" style="top:269.10px;font-size:12.76px;line-height:12.76px;color:#3a3a3a;left:594px;width:400px;text-align:right;transform-origin:100% 0;transform:scaleX(0.9091);">32.00</div>
<div class="t" style="top:269.10px;font-size:12.76px;line-height:12.76px;color:#3a3a3a;left:658px;width:400px;text-align:right;transform-origin:100% 0;transform:scaleX(0.9091);">3.00</div>
<div class="t" style="top:269.10px;font-size:12.76px;line-height:12.76px;color:#3a3a3a;left:722px;width:400px;text-align:right;transform-origin:100% 0;transform:scaleX(0.9091);">5.00</div>
<svg class="a" style="left:783px;top:266px;" width="16" height="16" viewBox="0 0 16 16"><g fill="#9a9a9a"><rect x="7" y="0" width="3.3" height="2.6"/><rect x="12" y="0" width="3.3" height="2.6"/><rect x="12.5" y="4" width="2.6" height="2.6"/><rect x="0" y="9" width="2.8" height="2.6"/><rect x="0" y="13" width="3.3" height="2.6"/><rect x="5" y="13" width="3.3" height="2.6"/></g><path d="M4.6 11 L10.5 5.1" stroke="#2f7fd6" stroke-width="2"/><path d="M3.5 12.2 L3.5 6.8 L8.9 12.2 Z M11.6 3.9 L11.6 9.3 L6.2 3.9 Z" fill="#2f7fd6"/></svg>
<div class="a" style="left:1142px;top:222px;width:310px;height:20px;background:#f3f3f3;"></div>
<div class="a" style="left:1142px;top:222px;width:311px;height:1px;background:#dedede;"></div>
<div class="a" style="left:1142px;top:242px;width:311px;height:1px;background:#dedede;"></div>
<div class="a" style="left:1142px;top:263px;width:311px;height:1px;background:#dedede;"></div>
<div class="a" style="left:1142px;top:284px;width:311px;height:1px;background:#dedede;"></div>
<div class="a" style="left:1142px;top:222px;width:1px;height:63px;background:#dedede;"></div>
<div class="a" style="left:1191px;top:222px;width:1px;height:63px;background:#dedede;"></div>
<div class="a" style="left:1260px;top:222px;width:1px;height:63px;background:#dedede;"></div>
<div class="a" style="left:1323px;top:222px;width:1px;height:63px;background:#dedede;"></div>
<div class="a" style="left:1387px;top:222px;width:1px;height:63px;background:#dedede;"></div>
<div class="a" style="left:1452px;top:222px;width:1px;height:63px;background:#dedede;"></div>
<div class="t" style="top:227.69px;font-size:12.65px;line-height:12.65px;color:#444;left:1142.0px;width:49px;text-align:center;transform-origin:50% 0;transform:scaleX(0.9091);">Sub</div>
<div class="t" style="top:227.69px;font-size:12.65px;line-height:12.65px;color:#444;left:1191.0px;width:69px;text-align:center;transform-origin:50% 0;transform:scaleX(0.9091);">Type</div>
<div class="t" style="top:227.69px;font-size:12.65px;line-height:12.65px;color:#444;left:1260.0px;width:63px;text-align:center;transform-origin:50% 0;transform:scaleX(0.9091);">Sea</div>
<div class="t" style="top:227.69px;font-size:12.65px;line-height:12.65px;color:#444;left:1323.0px;width:64px;text-align:center;transform-origin:50% 0;transform:scaleX(0.9091);">Idle</div>
<div class="t" style="top:227.69px;font-size:12.65px;line-height:12.65px;color:#444;left:1387.0px;width:65px;text-align:center;transform-origin:50% 0;transform:scaleX(0.9091);">Work</div>
<div class="t" style="top:248.10px;font-size:12.76px;line-height:12.76px;color:#3a3a3a;left:1146px;transform-origin:0 0;transform:scaleX(0.9091);">Normal</div>
<div class="t" style="top:248.10px;font-size:12.76px;line-height:12.76px;color:#3a3a3a;left:1195px;transform-origin:0 0;transform:scaleX(0.9091);">MGO</div>
<div class="t" style="top:248.10px;font-size:12.76px;line-height:12.76px;color:#3a3a3a;left:919px;width:400px;text-align:right;transform-origin:100% 0;transform:scaleX(0.9091);">0.10</div>
<div class="t" style="top:248.10px;font-size:12.76px;line-height:12.76px;color:#3a3a3a;left:983px;width:400px;text-align:right;transform-origin:100% 0;transform:scaleX(0.9091);">0.10</div>
<div class="t" style="top:248.10px;font-size:12.76px;line-height:12.76px;color:#3a3a3a;left:1048px;width:400px;text-align:right;transform-origin:100% 0;transform:scaleX(0.9091);">0.10</div>
<div class="t" style="top:269.10px;font-size:12.76px;line-height:12.76px;color:#3a3a3a;left:1146px;transform-origin:0 0;transform:scaleX(0.9091);">ECA</div>
<div class="t" style="top:269.10px;font-size:12.76px;line-height:12.76px;color:#3a3a3a;left:1195px;transform-origin:0 0;transform:scaleX(0.9091);">MGO</div>
<div class="t" style="top:269.10px;font-size:12.76px;line-height:12.76px;color:#3a3a3a;left:919px;width:400px;text-align:right;transform-origin:100% 0;transform:scaleX(0.9091);">0.10</div>
<div class="t" style="top:269.10px;font-size:12.76px;line-height:12.76px;color:#3a3a3a;left:983px;width:400px;text-align:right;transform-origin:100% 0;transform:scaleX(0.9091);">0.10</div>
<div class="t" style="top:269.10px;font-size:12.76px;line-height:12.76px;color:#3a3a3a;left:1048px;width:400px;text-align:right;transform-origin:100% 0;transform:scaleX(0.9091);">0.10</div>
<svg class="a" style="left:1172px;top:266px;" width="16" height="16" viewBox="0 0 16 16"><g fill="#9a9a9a"><rect x="7" y="0" width="3.3" height="2.6"/><rect x="12" y="0" width="3.3" height="2.6"/><rect x="12.5" y="4" width="2.6" height="2.6"/><rect x="0" y="9" width="2.8" height="2.6"/><rect x="0" y="13" width="3.3" height="2.6"/><rect x="5" y="13" width="3.3" height="2.6"/></g><path d="M4.6 11 L10.5 5.1" stroke="#2f7fd6" stroke-width="2"/><path d="M3.5 12.2 L3.5 6.8 L8.9 12.2 Z M11.6 3.9 L11.6 9.3 L6.2 3.9 Z" fill="#2f7fd6"/></svg>
<div class="a" style="left:1215px;top:165px;width:254px;height:26px;background:#f3f3f3;border:1px solid #d8d8d8;border-top:none;box-sizing:border-box;"></div>
<div class="t" style="top:172.13px;font-size:13.20px;line-height:13.20px;color:#333;font-weight:bold;left:1225px;transform-origin:0 0;transform:scaleX(0.9091);">Last Update : 2025-04-17 15:54, </div>
<svg class="a" style="left:1405px;top:171px;overflow:hidden;" width="56" height="14" viewBox="0 0 56 14"><rect x="0" y="0" width="4" height="4" fill="rgb(195,195,195)"/><rect x="4" y="0" width="4" height="4" fill="rgb(217,217,217)"/><rect x="8" y="0" width="4" height="4" fill="rgb(214,214,214)"/><rect x="12" y="0" width="4" height="4" fill="rgb(188,188,188)"/><rect x="16" y="0" width="4" height="4" fill="rgb(203,203,203)"/><rect x="20" y="0" width="4" height="4" fill="rgb(218,218,218)"/><rect x="24" y="0" width="4" height="4" fill="rgb(210,210,210)"/><rect x="28" y="0" width="4" height="4" fill="rgb(220,220,220)"/><rect x="32" y="0" width="4" height="4" fill="rgb(217,217,217)"/><rect x="36" y="0" width="4" height="4" fill="rgb(184,184,184)"/><rect x="40" y="0" width="4" height="4" fill="rgb(218,218,218)"/><rect x="44" y="0" width="4" height="4" fill="rgb(180,180,180)"/><rect x="48" y="0" width="4" height="4" fill="rgb(210,210,210)"/><rect x="52" y="0" width="4" height="4" fill="rgb(196,196,196)"/><rect x="56" y="0" width="4" height="4" fill="rgb(215,215,215)"/><rect x="0" y="4" width="4" height="4" fill="rgb(194,194,194)"/><rect x="4" y="4" width="4" height="4" fill="rgb(192,192,192)"/><rect x="8" y="4" width="4" height="4" fill="rgb(225,225,225)"/><rect x="12" y="4" width="4" height="4" fill="rgb(210,210,210)"/><rect x="16" y="4" width="4" height="4" fill="rgb(214,214,214)"/><rect x="20" y="4" width="4" height="4" fill="rgb(215,215,215)"/><rect x="24" y="4" width="4" height="4" fill="rgb(210,210,210)"/><rect x="28" y="4" width="4" height="4" fill="rgb(205,205,205)"/><rect x="32" y="4" width="4" height="4" fill="rgb(220,220,220)"/><rect x="36" y="4" width="4" height="4" fill="rgb(189,189,189)"/><rect x="40" y="4" width="4" height="4" fill="rgb(194,194,194)"/><rect x="44" y="4" width="4" height="4" fill="rgb(220,220,220)"/><rect x="48" y="4" width="4" height="4" fill="rgb(189,189,189)"/><rect x="52" y="4" width="4" height="4" fill="rgb(213,213,213)"/><rect x="56" y="4" width="4" height="4" fill="rgb(204,204,204)"/><rect x="0" y="8" width="4" height="4" fill="rgb(159,159,159)"/><rect x="4" y="8" width="4" height="4" fill="rgb(147,147,147)"/><rect x="8" y="8" width="4" height="4" fill="rgb(111,111,111)"/><rect x="12" y="8" width="4" height="4" fill="rgb(156,156,156)"/><rect x="16" y="8" width="4" height="4" fill="rgb(204,204,204)"/><rect x="20" y="8" width="4" height="4" fill="rgb(161,161,161)"/><rect x="24" y="8" width="4" height="4" fill="rgb(169,169,169)"/><rect x="28" y="8" width="4" height="4" fill="rgb(188,188,188)"/><rect x="32" y="8" width="4" height="4" fill="rgb(141,141,141)"/><rect x="36" y="8" width="4" height="4" fill="rgb(153,153,153)"/><rect x="40" y="8" width="4" height="4" fill="rgb(207,207,207)"/><rect x="44" y="8" width="4" height="4" fill="rgb(163,163,163)"/><rect x="48" y="8" width="4" height="4" fill="rgb(204,204,204)"/><rect x="52" y="8" width="4" height="4" fill="rgb(214,214,214)"/><rect x="56" y="8" width="4" height="4" fill="rgb(131,131,131)"/><rect x="0" y="12" width="4" height="4" fill="rgb(223,223,223)"/><rect x="4" y="12" width="4" height="4" fill="rgb(181,181,181)"/><rect x="8" y="12" width="4" height="4" fill="rgb(197,197,197)"/><rect x="12" y="12" width="4" height="4" fill="rgb(218,218,218)"/><rect x="16" y="12" width="4" height="4" fill="rgb(222,222,222)"/><rect x="20" y="12" width="4" height="4" fill="rgb(224,224,224)"/><rect x="24" y="12" width="4" height="4" fill="rgb(190,190,190)"/><rect x="28" y="12" width="4" height="4" fill="rgb(224,224,224)"/><rect x="32" y="12" width="4" height="4" fill="rgb(200,200,200)"/><rect x="36" y="12" width="4" height="4" fill="rgb(214,214,214)"/><rect x="40" y="12" width="4" height="4" fill="rgb(216,216,216)"/><rect x="44" y="12" width="4" height="4" fill="rgb(216,216,216)"/><rect x="48" y="12" width="4" height="4" fill="rgb(186,186,186)"/><rect x="52" y="12" width="4" height="4" fill="rgb(225,225,225)"/><rect x="56" y="12" width="4" height="4" fill="rgb(221,221,221)"/></svg>
<div class="a" style="left:1320px;top:199px;width:13px;height:13px;background:#fff;border:1px solid #9a9a9a;box-sizing:border-box;"></div>
<div class="t" style="top:199.60px;font-size:12.76px;line-height:12.76px;color:#444;left:1337.5px;transform-origin:0 0;transform:scaleX(0.9091);">Fix Port Consumption</div>
<div class="t" style="top:307.68px;font-size:15.73px;line-height:15.73px;color:#9e4015;font-weight:bold;left:8px;transform-origin:0 0;transform:scaleX(0.9091);">Cargo</div>
<div class="a" style="left:452px;top:305px;width:206px;height:22px;background:#fff;border:1px solid #d5d5d5;box-sizing:border-box;"></div>
<svg class="a" style="left:465px;top:311px;" width="14" height="11" viewBox="0 0 14 11"><rect x="2" y="0" width="1.4" height="4" fill="#555"/><rect x="1" y="2" width="3" height="3" fill="#555"/><rect x="5" y="2" width="2.5" height="2.2" fill="#3d7fd0"/><rect x="8" y="2" width="2.5" height="2.2" fill="#3d7fd0"/><path d="M0 5.5 L13.5 5.5 L11.5 10 L1.5 10 Z" fill="#555"/></svg>
<div class="t" style="top:309.79px;font-size:12.65px;line-height:12.65px;color:#333;font-weight:bold;left:485.5px;transform-origin:0 0;transform:scaleX(0.9091);">Loadable Quantity Calculator</div>
<div class="t" style="top:309.78px;font-size:12.43px;line-height:12.43px;color:#333;font-weight:bold;left:703.8px;transform-origin:0 0;transform:scaleX(0.9091);">.00 MT</div>
<div class="a" style="left:820px;top:305px;width:123px;height:22px;background:#fff;border:1px solid #d5d5d5;box-sizing:border-box;"></div>
<svg class="a" style="left:834px;top:309px;" width="14" height="15" viewBox="0 0 14 15"><rect x="0.7" y="0.7" width="11" height="13" fill="#fff" stroke="#555" stroke-width="1.2"/><rect x="2.5" y="2.5" width="7.5" height="2.5" fill="#3d7fd0"/><g fill="#555"><rect x="2.5" y="6.5" width="2" height="1.6"/><rect x="5.5" y="6.5" width="2" height="1.6"/><rect x="2.5" y="9.5" width="2" height="1.6"/></g><rect x="8.5" y="6.5" width="2" height="1.6" fill="#f0922e"/><rect x="8" y="10" width="2.5" height="2" fill="#aaa"/><rect x="11" y="10" width="2.5" height="2" fill="#aaa"/><rect x="8" y="12.5" width="2.5" height="2" fill="#aaa"/><rect x="11" y="12.5" width="2.5" height="2" fill="#aaa"/></svg>
<div class="t" style="top:309.79px;font-size:12.65px;line-height:12.65px;color:#333;font-weight:bold;left:853px;transform-origin:0 0;transform:scaleX(0.9091);">Frt. Simulator</div>
<div class="a" style="left:8px;top:330px;width:1462px;height:97px;border:1px solid #d8d8d8;box-sizing:border-box;"></div>
<div class="a" style="left:8px;top:330px;width:1461px;height:21px;background:#f3f3f3;"></div>
<div class="a" style="left:8px;top:330px;width:1462px;height:1px;background:#dedede;"></div>
<div class="a" style="left:8px;top:351px;width:1462px;height:1px;background:#dedede;"></div>
<div class="a" style="left:8px;top:371px;width:1462px;height:1px;background:#dedede;"></div>
<div class="a" style="left:8px;top:392px;width:1462px;height:1px;background:#dedede;"></div>
<div class="a" style="left:8px;top:330px;width:1px;height:63px;background:#dedede;"></div>
<div class="a" style="left:30px;top:330px;width:1px;height:63px;background:#dedede;"></div>
<div class="a" style="left:157px;top:330px;width:1px;height:63px;background:#dedede;"></div>
<div class="a" style="left:284px;top:330px;width:1px;height:63px;background:#dedede;"></div>
<div class="a" style="left:471px;top:330px;width:1px;height:63px;background:#dedede;"></div>
<div class="a" style="left:657px;top:330px;width:1px;height:63px;background:#dedede;"></div>
<div class="a" style="left:780px;top:330px;width:1px;height:63px;background:#dedede;"></div>
<div class="a" style="left:860px;top:330px;width:1px;height:63px;background:#dedede;"></div>
<div class="a" style="left:918px;top:330px;width:1px;height:63px;background:#dedede;"></div>
<div class="a" style="left:971px;top:330px;width:1px;height:63px;background:#dedede;"></div>
<div class="a" style="left:1105px;top:330px;width:1px;height:63px;background:#dedede;"></div>
<div class="a" style="left:1183px;top:330px;width:1px;height:63px;background:#dedede;"></div>
<div class="a" style="left:1262px;top:330px;width:1px;height:63px;background:#dedede;"></div>
<div class="a" style="left:1340px;top:330px;width:1px;height:63px;background:#dedede;"></div>
<div class="a" style="left:1469px;top:330px;width:1px;height:63px;background:#dedede;"></div>
<div class="t" style="top:335.29px;font-size:12.65px;line-height:12.65px;color:#444;left:30.0px;width:127px;text-align:center;transform-origin:50% 0;transform:scaleX(0.9091);">Account</div>
<div class="t" style="top:335.29px;font-size:12.65px;line-height:12.65px;color:#444;left:157.0px;width:127px;text-align:center;transform-origin:50% 0;transform:scaleX(0.9091);">Cargo</div>
<div class="t" style="top:335.29px;font-size:12.65px;line-height:12.65px;color:#444;left:284.0px;width:187px;text-align:center;transform-origin:50% 0;transform:scaleX(0.9091);">Loading Port</div>
<div class="t" style="top:335.29px;font-size:12.65px;line-height:12.65px;color:#444;left:471.0px;width:186px;text-align:center;transform-origin:50% 0;transform:scaleX(0.9091);">Discharging Port</div>
<div class="t" style="top:335.29px;font-size:12.65px;line-height:12.65px;color:#444;left:971.0px;width:134px;text-align:center;transform-origin:50% 0;transform:scaleX(0.9091);">Total Freight</div>
<div class="t" style="top:335.29px;font-size:12.65px;line-height:12.65px;color:#444;left:1105.0px;width:78px;text-align:center;transform-origin:50% 0;transform:scaleX(0.9091);">A. Comm</div>
<div class="t" style="top:335.29px;font-size:12.65px;line-height:12.65px;color:#444;left:1183.0px;width:79px;text-align:center;transform-origin:50% 0;transform:scaleX(0.9091);">Brkg</div>
<div class="t" style="top:335.29px;font-size:12.65px;line-height:12.65px;color:#444;left:1262.0px;width:78px;text-align:center;transform-origin:50% 0;transform:scaleX(0.9091);">Frt Tax</div>
<div class="t" style="top:335.29px;font-size:12.65px;line-height:12.65px;color:#444;left:1340.0px;width:129px;text-align:center;transform-origin:50% 0;transform:scaleX(0.9091);">Liner Term</div>
<div class="a" style="left:9px;top:352px;width:21px;height:19px;background:#d6e7f7;"></div>
<div class="a" style="left:972px;top:352px;width:133px;height:19px;background:#fffde2;"></div>
<div class="a" style="left:972px;top:372px;width:133px;height:20px;background:#fffde2;"></div>
<div class="t" style="top:355.79px;font-size:12.65px;line-height:12.65px;color:#444;left:9.5px;width:20px;text-align:center;transform-origin:50% 0;transform:scaleX(0.9091);">1</div>
<div class="t" style="top:376.29px;font-size:12.65px;line-height:12.65px;color:#444;left:9.5px;width:20px;text-align:center;transform-origin:50% 0;transform:scaleX(0.9091);">2</div>
<div class="t" style="top:355.70px;font-size:12.76px;line-height:12.76px;color:#3a3a3a;left:34px;transform-origin:0 0;transform:scaleX(0.9091);">Coal Trader</div>
<svg class="a" style="left:141px;top:354px;" width="14" height="14" viewBox="0 0 14 14"><circle cx="5.3" cy="4.9" r="4.75" fill="none" stroke="#555" stroke-width="1.25"/><line x1="8.7" y1="8.4" x2="12.6" y2="12.3" stroke="#555" stroke-width="1.6" stroke-linecap="round"/></svg>
<div class="t" style="top:355.70px;font-size:12.76px;line-height:12.76px;color:#3a3a3a;left:162px;transform-origin:0 0;transform:scaleX(0.9091);">Coal in Bulk</div>
<svg class="a" style="left:268px;top:354px;" width="14" height="14" viewBox="0 0 14 14"><circle cx="5.3" cy="4.9" r="4.75" fill="none" stroke="#555" stroke-width="1.25"/><line x1="8.7" y1="8.4" x2="12.6" y2="12.3" stroke="#555" stroke-width="1.6" stroke-linecap="round"/></svg>
<div class="t" style="top:355.70px;font-size:12.76px;line-height:12.76px;color:#3a3a3a;left:289px;transform-origin:0 0;transform:scaleX(0.9091);">Banjarmasin &lt;Indonesia&gt; [...</div>
<svg class="a" style="left:453px;top:354px;" width="14" height="14" viewBox="0 0 14 14"><circle cx="7" cy="7" r="6.6" fill="#3d7fd0"/><rect x="6" y="5.8" width="2.1" height="5.2" fill="#fff"/><circle cx="7.05" cy="3.6" r="1.15" fill="#fff"/></svg>
<div class="t" style="top:355.70px;font-size:12.76px;line-height:12.76px;color:#3a3a3a;left:476px;transform-origin:0 0;transform:scaleX(0.9091);">Ravenna &lt;Italy&gt; [+01:00]</div>
<svg class="a" style="left:640px;top:354px;" width="14" height="14" viewBox="0 0 14 14"><circle cx="7" cy="7" r="6.6" fill="#3d7fd0"/><rect x="6" y="5.8" width="2.1" height="5.2" fill="#fff"/><circle cx="7.05" cy="3.6" r="1.15" fill="#fff"/></svg>
<svg class="a" style="left:453px;top:375px;" width="13" height="13" viewBox="0 0 13 13"><path d="M1 12 L1.8 8.6 L8.8 1.6 L11.4 4.2 L4.4 11.2 Z" fill="#2a78d8"/><path d="M9.6 0.8 L10.4 0 L13 2.6 L12.2 3.4 Z" fill="#2a78d8"/></svg>
<svg class="a" style="left:640px;top:375px;" width="13" height="13" viewBox="0 0 13 13"><path d="M1 12 L1.8 8.6 L8.8 1.6 L11.4 4.2 L4.4 11.2 Z" fill="#2a78d8"/><path d="M9.6 0.8 L10.4 0 L13 2.6 L12.2 3.4 Z" fill="#2a78d8"/></svg>
<div class="t" style="top:355.70px;font-size:12.76px;line-height:12.76px;color:#3a3a3a;left:701px;width:400px;text-align:right;transform-origin:100% 0;transform:scaleX(0.9091);">577,500.00</div>
<div class="t" style="top:355.70px;font-size:12.76px;line-height:12.76px;color:#3a3a3a;left:779px;width:400px;text-align:right;transform-origin:100% 0;transform:scaleX(0.9091);">3.75 %</div>
<div class="t" style="top:355.70px;font-size:12.76px;line-height:12.76px;color:#3a3a3a;left:858px;width:400px;text-align:right;transform-origin:100% 0;transform:scaleX(0.9091);">1.25 %</div>
<svg class="a" style="left:1343px;top:354px;" width="14" height="14" viewBox="0 0 14 14"><circle cx="5.3" cy="4.9" r="4.75" fill="none" stroke="#555" stroke-width="1.25"/><line x1="8.7" y1="8.4" x2="12.6" y2="12.3" stroke="#555" stroke-width="1.6" stroke-linecap="round"/></svg>
<div class="a" style="left:30.5px;top:399px;width:21px;height:18px;background:#f6f6f6;border:1px solid #d2d2d2;box-sizing:border-box;"></div>
<svg class="a" style="left:32.5px;top:399.5px;" width="17" height="17" viewBox="0 0 17 17"><rect x="4" y="5" width="9" height="10" fill="#444"/><rect x="3" y="3" width="11" height="1.6" fill="#444"/><rect x="6.5" y="1.5" width="4" height="1.6" fill="#444"/></svg>
<div class="a" style="left:54px;top:399px;width:21px;height:18px;background:#f6f6f6;border:1px solid #d2d2d2;box-sizing:border-box;"></div>
<svg class="a" style="left:56px;top:399.5px;" width="17" height="17" viewBox="0 0 17 17"><circle cx="8.5" cy="8.5" r="6.5" fill="#4cb35a"/><rect x="7.3" y="4.5" width="2.4" height="8" fill="#fff"/><rect x="4.5" y="7.3" width="8" height="2.4" fill="#fff"/></svg>
<div class="a" style="left:77.5px;top:399px;width:21px;height:18px;background:#f6f6f6;border:1px solid #d2d2d2;box-sizing:border-box;"></div>
<svg class="a" style="left:79.5px;top:399.5px;" width="17" height="17" viewBox="0 0 17 17"><rect x="2" y="6" width="5" height="3" fill="#3d7fd0"/><path d="M7.5 7.5 L11 7.5" stroke="#4cb35a" stroke-width="1.2"/><path d="M10 5.5 L12 7.5 L10 9.5" fill="#4cb35a"/><rect x="12" y="1" width="4" height="2.5" fill="#aaa"/><rect x="12" y="11" width="4" height="2.5" fill="#aaa"/><rect x="12" y="14.5" width="4" height="2" fill="#aaa"/></svg>
<div class="a" style="left:100.5px;top:399px;width:21px;height:18px;background:#f6f6f6;border:1px solid #d2d2d2;box-sizing:border-box;"></div>
<svg class="a" style="left:102.5px;top:399.5px;" width="17" height="17" viewBox="0 0 17 17"><path d="M2 8.5 L5 7 L5 10 Z" fill="#444"/><rect x="5" y="7.8" width="2" height="1.4" fill="#444"/><rect x="7.5" y="6.5" width="8" height="4" fill="#444"/><rect x="8" y="2" width="3" height="2.5" fill="#aaa"/><rect x="12" y="2" width="3" height="2.5" fill="#aaa"/><rect x="8" y="12.5" width="3" height="2.5" fill="#aaa"/><rect x="12" y="12.5" width="3" height="2.5" fill="#aaa"/></svg>
<div class="a" style="left:124.5px;top:399px;width:21px;height:18px;background:#f6f6f6;border:1px solid #d2d2d2;box-sizing:border-box;"></div>
<svg class="a" style="left:126.5px;top:399.5px;" width="17" height="17" viewBox="0 0 17 17"><rect x="2" y="2" width="3.5" height="2.5" fill="#aaa"/><rect x="7" y="2" width="3.5" height="2.5" fill="#aaa"/><rect x="12" y="2" width="3.5" height="2.5" fill="#aaa"/><rect x="2" y="7" width="13.5" height="3" fill="#3d7fd0"/><rect x="2" y="12.5" width="3.5" height="2.5" fill="#aaa"/><rect x="7" y="12.5" width="3.5" height="2.5" fill="#aaa"/><rect x="12" y="12.5" width="3.5" height="2.5" fill="#aaa"/><path d="M7.5 4.5 L10 4.5 L8.75 2.5 Z" fill="#4cb35a"/></svg>
<div class="a" style="left:148px;top:399px;width:21px;height:18px;background:#f6f6f6;border:1px solid #d2d2d2;box-sizing:border-box;"></div>
<svg class="a" style="left:150px;top:399.5px;" width="17" height="17" viewBox="0 0 17 17"><rect x="2" y="2" width="3.5" height="2.5" fill="#aaa"/><rect x="7" y="2" width="3.5" height="2.5" fill="#aaa"/><rect x="12" y="2" width="3.5" height="2.5" fill="#aaa"/><rect x="2" y="6.5" width="13.5" height="3" fill="#3d7fd0"/><rect x="2" y="12.5" width="3.5" height="2.5" fill="#aaa"/><rect x="12" y="12.5" width="3.5" height="2.5" fill="#aaa"/><path d="M7.5 12 L10 12 L8.75 14.5 Z" fill="#4cb35a"/></svg>
<div class="t" style="top:404.20px;font-size:12.76px;line-height:12.76px;color:#3a3a3a;left:375.5px;width:400px;text-align:right;transform-origin:100% 0;transform:scaleX(0.9091);">55,000.00</div>
<div class="t" style="top:404.20px;font-size:12.76px;line-height:12.76px;color:#3a3a3a;left:514px;width:400px;text-align:right;transform-origin:100% 0;transform:scaleX(0.9091);">10.50</div>
<div class="t" style="top:404.20px;font-size:12.76px;line-height:12.76px;color:#3a3a3a;left:701px;width:400px;text-align:right;transform-origin:100% 0;transform:scaleX(0.9091);">577,500.00</div>
<div class="t" style="top:404.20px;font-size:12.76px;line-height:12.76px;color:#3a3a3a;left:779px;width:400px;text-align:right;transform-origin:100% 0;transform:scaleX(0.9091);">3.75 %</div>
<div class="t" style="top:404.20px;font-size:12.76px;line-height:12.76px;color:#3a3a3a;left:858px;width:400px;text-align:right;transform-origin:100% 0;transform:scaleX(0.9091);">1.25 %</div>
<div class="t" style="top:404.20px;font-size:12.76px;line-height:12.76px;color:#3a3a3a;left:936px;width:400px;text-align:right;transform-origin:100% 0;transform:scaleX(0.9091);">0.00 %</div>
<div class="t" style="top:404.20px;font-size:12.76px;line-height:12.76px;color:#3a3a3a;left:1065px;width:400px;text-align:right;transform-origin:100% 0;transform:scaleX(0.9091);">0.00</div>
<div class="t" style="top:443.68px;font-size:15.73px;line-height:15.73px;color:#9e4015;font-weight:bold;left:8px;transform-origin:0 0;transform:scaleX(0.9091);">Port Rotation</div>
<div class="a" style="left:111px;top:446px;width:13px;height:13px;background:#fff;border:1px solid #9a9a9a;box-sizing:border-box;"></div>
<svg class="a" style="left:111px;top:446px;" width="13" height="13" viewBox="0 0 13 13"><path d="M2.6 6.6 L5.2 9.4 L10.6 3.2" fill="none" stroke="#333" stroke-width="1.3"/></svg>
<div class="t" style="top:447.20px;font-size:12.76px;line-height:12.76px;color:#444;left:128px;transform-origin:0 0;transform:scaleX(0.9091);">SUEZ</div>
<div class="a" style="left:166px;top:446px;width:13px;height:13px;background:#fff;border:1px solid #9a9a9a;box-sizing:border-box;"></div>
<svg class="a" style="left:166px;top:446px;" width="13" height="13" viewBox="0 0 13 13"><path d="M2.6 6.6 L5.2 9.4 L10.6 3.2" fill="none" stroke="#333" stroke-width="1.3"/></svg>
<div class="t" style="top:447.20px;font-size:12.76px;line-height:12.76px;color:#444;left:183.5px;transform-origin:0 0;transform:scaleX(0.9091);">PANAMA</div>
<div class="a" style="left:241px;top:446px;width:13px;height:13px;background:#fff;border:1px solid #9a9a9a;box-sizing:border-box;"></div>
<div class="t" style="top:447.20px;font-size:12.76px;line-height:12.76px;color:#444;left:259px;transform-origin:0 0;transform:scaleX(0.9091);">KIEL</div>
<div class="t" style="top:446.37px;font-size:13.04px;line-height:13.04px;color:#333;font-weight:bold;left:300.5px;transform-origin:0 0;transform:scaleX(0.9091);">Total Duration: 32.98 (ECA: 7.92) Days (Ballast: 2.39, Laden: 21.14, Port: 9.46) / (Port local time) 2025-04-29 10:00 ~ 2025-06-01 02:32</div>
<div class="a" style="left:8px;top:466px;width:1462px;height:179px;border:1px solid #d8d8d8;box-sizing:border-box;"></div>
<div class="a" style="left:8px;top:466px;width:1461px;height:20px;background:#f3f3f3;"></div>
<div class="a" style="left:30px;top:486px;width:70px;height:21px;background:#f0f4fd;"></div>
<div class="a" style="left:393px;top:486px;width:24px;height:21px;background:#f0f4fd;"></div>
<div class="a" style="left:417px;top:486px;width:69px;height:21px;background:#f0f4fd;"></div>
<div class="a" style="left:486px;top:486px;width:68px;height:21px;background:#f0f4fd;"></div>
<div class="a" style="left:554px;top:486px;width:49px;height:21px;background:#f0f4fd;"></div>
<div class="a" style="left:603px;top:486px;width:45px;height:21px;background:#f0f4fd;"></div>
<div class="a" style="left:648px;top:486px;width:60px;height:21px;background:#f0f4fd;"></div>
<div class="a" style="left:708px;top:486px;width:98px;height:21px;background:#f0f4fd;"></div>
<div class="a" style="left:806px;top:486px;width:61px;height:21px;background:#f0f4fd;"></div>
<div class="a" style="left:867px;top:486px;width:61px;height:21px;background:#f0f4fd;"></div>
<div class="a" style="left:928px;top:486px;width:25px;height:21px;background:#f0f4fd;"></div>
<div class="a" style="left:953px;top:486px;width:83px;height:21px;background:#f0f4fd;"></div>
<div class="a" style="left:1036px;top:486px;width:83px;height:21px;background:#f0f4fd;"></div>
<div class="a" style="left:1119px;top:486px;width:94px;height:21px;background:#f0f4fd;"></div>
<div class="a" style="left:1213px;top:486px;width:127px;height:21px;background:#f0f4fd;"></div>
<div class="a" style="left:30px;top:507px;width:70px;height:21px;background:#f0f4fd;"></div>
<div class="a" style="left:417px;top:507px;width:69px;height:21px;background:#fffde2;"></div>
<div class="a" style="left:486px;top:507px;width:68px;height:21px;background:#fffde2;"></div>
<div class="a" style="left:648px;top:507px;width:60px;height:21px;background:#fffde2;"></div>
<div class="a" style="left:806px;top:507px;width:61px;height:21px;background:#fffde2;"></div>
<div class="a" style="left:867px;top:507px;width:61px;height:21px;background:#fffde2;"></div>
<div class="a" style="left:953px;top:507px;width:83px;height:21px;background:#fffde2;"></div>
<div class="a" style="left:1036px;top:507px;width:83px;height:21px;background:#fffde2;"></div>
<div class="a" style="left:1213px;top:507px;width:127px;height:21px;background:#fffde2;"></div>
<div class="a" style="left:1340px;top:507px;width:129px;height:21px;background:#fffde2;"></div>
<div class="a" style="left:8px;top:528px;width:22px;height:20px;background:#d6e7f7;"></div>
<div class="a" style="left:417px;top:528px;width:69px;height:20px;background:#fffde2;"></div>
<div class="a" style="left:486px;top:528px;width:68px;height:20px;background:#fffde2;"></div>
<div class="a" style="left:648px;top:528px;width:60px;height:20px;background:#fffde2;"></div>
<div class="a" style="left:708px;top:528px;width:98px;height:20px;background:#f0f4fd;"></div>
<div class="a" style="left:867px;top:528px;width:61px;height:20px;background:#f0f4fd;"></div>
<div class="a" style="left:928px;top:528px;width:25px;height:20px;background:#f0f4fd;"></div>
<div class="a" style="left:953px;top:528px;width:83px;height:20px;background:#f0f4fd;"></div>
<div class="a" style="left:1036px;top:528px;width:83px;height:20px;background:#f0f4fd;"></div>
<div class="a" style="left:1213px;top:528px;width:127px;height:20px;background:#fffde2;"></div>
<div class="a" style="left:1340px;top:528px;width:129px;height:20px;background:#fffde2;"></div>
<div class="a" style="left:30px;top:548px;width:70px;height:21px;background:#f0f4fd;"></div>
<div class="a" style="left:417px;top:548px;width:69px;height:21px;background:#fffde2;"></div>
<div class="a" style="left:486px;top:548px;width:68px;height:21px;background:#fffde2;"></div>
<div class="a" style="left:648px;top:548px;width:60px;height:21px;background:#fffde2;"></div>
<div class="a" style="left:806px;top:548px;width:61px;height:21px;background:#fffde2;"></div>
<div class="a" style="left:867px;top:548px;width:61px;height:21px;background:#fffde2;"></div>
<div class="a" style="left:953px;top:548px;width:83px;height:21px;background:#fffde2;"></div>
<div class="a" style="left:1036px;top:548px;width:83px;height:21px;background:#fffde2;"></div>
<div class="a" style="left:1213px;top:548px;width:127px;height:21px;background:#fffde2;"></div>
<div class="a" style="left:1340px;top:548px;width:129px;height:21px;background:#fffde2;"></div>
<div class="a" style="left:343px;top:569px;width:25px;height:21px;background:#f0f4fd;"></div>
<div class="a" style="left:368px;top:569px;width:25px;height:21px;background:#f0f4fd;"></div>
<div class="a" style="left:393px;top:569px;width:24px;height:21px;background:#f0f4fd;"></div>
<div class="a" style="left:417px;top:569px;width:69px;height:21px;background:#f0f4fd;"></div>
<div class="a" style="left:486px;top:569px;width:68px;height:21px;background:#f0f4fd;"></div>
<div class="a" style="left:554px;top:569px;width:49px;height:21px;background:#f0f4fd;"></div>
<div class="a" style="left:603px;top:569px;width:45px;height:21px;background:#f0f4fd;"></div>
<div class="a" style="left:648px;top:569px;width:60px;height:21px;background:#f0f4fd;"></div>
<div class="a" style="left:708px;top:569px;width:98px;height:21px;background:#f0f4fd;"></div>
<div class="a" style="left:806px;top:569px;width:61px;height:21px;background:#f0f4fd;"></div>
<div class="a" style="left:867px;top:569px;width:61px;height:21px;background:#f0f4fd;"></div>
<div class="a" style="left:928px;top:569px;width:25px;height:21px;background:#f0f4fd;"></div>
<div class="a" style="left:953px;top:569px;width:83px;height:21px;background:#f0f4fd;"></div>
<div class="a" style="left:1036px;top:569px;width:83px;height:21px;background:#f0f4fd;"></div>
<div class="a" style="left:1119px;top:569px;width:94px;height:21px;background:#f0f4fd;"></div>
<div class="a" style="left:1213px;top:569px;width:127px;height:21px;background:#f0f4fd;"></div>
<div class="a" style="left:1340px;top:569px;width:129px;height:21px;background:#f0f4fd;"></div>
<div class="a" style="left:30px;top:590px;width:70px;height:20px;background:#f0f4fd;"></div>
<div class="a" style="left:100px;top:590px;width:243px;height:20px;background:#f0f4fd;"></div>
<div class="a" style="left:343px;top:590px;width:25px;height:20px;background:#f0f4fd;"></div>
<div class="a" style="left:368px;top:590px;width:25px;height:20px;background:#f0f4fd;"></div>
<div class="a" style="left:393px;top:590px;width:24px;height:20px;background:#f0f4fd;"></div>
<div class="a" style="left:417px;top:590px;width:69px;height:20px;background:#f0f4fd;"></div>
<div class="a" style="left:486px;top:590px;width:68px;height:20px;background:#f0f4fd;"></div>
<div class="a" style="left:554px;top:590px;width:49px;height:20px;background:#f0f4fd;"></div>
<div class="a" style="left:603px;top:590px;width:45px;height:20px;background:#f0f4fd;"></div>
<div class="a" style="left:708px;top:590px;width:98px;height:20px;background:#f0f4fd;"></div>
<div class="a" style="left:928px;top:590px;width:25px;height:20px;background:#f0f4fd;"></div>
<div class="a" style="left:953px;top:590px;width:83px;height:20px;background:#f0f4fd;"></div>
<div class="a" style="left:1036px;top:590px;width:83px;height:20px;background:#f0f4fd;"></div>
<div class="a" style="left:1119px;top:590px;width:94px;height:20px;background:#f0f4fd;"></div>
<div class="a" style="left:1213px;top:590px;width:127px;height:20px;background:#f0f4fd;"></div>
<div class="a" style="left:1340px;top:590px;width:129px;height:20px;background:#f0f4fd;"></div>
<div class="a" style="left:8px;top:466px;width:1462px;height:1px;background:#dedede;"></div>
<div class="a" style="left:8px;top:486px;width:1462px;height:1px;background:#dedede;"></div>
<div class="a" style="left:8px;top:507px;width:1462px;height:1px;background:#dedede;"></div>
<div class="a" style="left:8px;top:528px;width:1462px;height:1px;background:#dedede;"></div>
<div class="a" style="left:8px;top:548px;width:1462px;height:1px;background:#dedede;"></div>
<div class="a" style="left:8px;top:569px;width:1462px;height:1px;background:#dedede;"></div>
<div class="a" style="left:8px;top:590px;width:1462px;height:1px;background:#dedede;"></div>
<div class="a" style="left:8px;top:610px;width:1462px;height:1px;background:#dedede;"></div>
<div class="a" style="left:8px;top:486px;width:1px;height:124px;background:#dedede;"></div>
<div class="a" style="left:8px;top:466px;width:1px;height:20px;background:#dedede;"></div>
<div class="a" style="left:30px;top:486px;width:1px;height:124px;background:#dedede;"></div>
<div class="a" style="left:30px;top:466px;width:1px;height:20px;background:#dedede;"></div>
<div class="a" style="left:100px;top:486px;width:1px;height:124px;background:#dedede;"></div>
<div class="a" style="left:100px;top:466px;width:1px;height:20px;background:#dedede;"></div>
<div class="a" style="left:343px;top:486px;width:1px;height:124px;background:#dedede;"></div>
<div class="a" style="left:368px;top:486px;width:1px;height:124px;background:#dedede;"></div>
<div class="a" style="left:393px;top:486px;width:1px;height:124px;background:#dedede;"></div>
<div class="a" style="left:417px;top:486px;width:1px;height:124px;background:#dedede;"></div>
<div class="a" style="left:417px;top:466px;width:1px;height:20px;background:#dedede;"></div>
<div class="a" style="left:486px;top:486px;width:1px;height:124px;background:#dedede;"></div>
<div class="a" style="left:554px;top:486px;width:1px;height:124px;background:#dedede;"></div>
<div class="a" style="left:554px;top:466px;width:1px;height:20px;background:#dedede;"></div>
<div class="a" style="left:603px;top:486px;width:1px;height:124px;background:#dedede;"></div>
<div class="a" style="left:603px;top:466px;width:1px;height:20px;background:#dedede;"></div>
<div class="a" style="left:648px;top:486px;width:1px;height:124px;background:#dedede;"></div>
<div class="a" style="left:648px;top:466px;width:1px;height:20px;background:#dedede;"></div>
<div class="a" style="left:708px;top:486px;width:1px;height:124px;background:#dedede;"></div>
<div class="a" style="left:708px;top:466px;width:1px;height:20px;background:#dedede;"></div>
<div class="a" style="left:806px;top:486px;width:1px;height:124px;background:#dedede;"></div>
<div class="a" style="left:806px;top:466px;width:1px;height:20px;background:#dedede;"></div>
<div class="a" style="left:867px;top:486px;width:1px;height:124px;background:#dedede;"></div>
<div class="a" style="left:928px;top:486px;width:1px;height:124px;background:#dedede;"></div>
<div class="a" style="left:953px;top:486px;width:1px;height:124px;background:#dedede;"></div>
<div class="a" style="left:953px;top:466px;width:1px;height:20px;background:#dedede;"></div>
<div class="a" style="left:1036px;top:486px;width:1px;height:124px;background:#dedede;"></div>
<div class="a" style="left:1036px;top:466px;width:1px;height:20px;background:#dedede;"></div>
<div class="a" style="left:1119px;top:486px;width:1px;height:124px;background:#dedede;"></div>
<div class="a" style="left:1119px;top:466px;width:1px;height:20px;background:#dedede;"></div>
<div class="a" style="left:1213px;top:486px;width:1px;height:124px;background:#dedede;"></div>
<div class="a" style="left:1213px;top:466px;width:1px;height:20px;background:#dedede;"></div>
<div class="a" style="left:1340px;top:486px;width:1px;height:124px;background:#dedede;"></div>
<div class="a" style="left:1340px;top:466px;width:1px;height:20px;background:#dedede;"></div>
<div class="a" style="left:1469px;top:486px;width:1px;height:124px;background:#dedede;"></div>
<div class="a" style="left:1469px;top:466px;width:1px;height:20px;background:#dedede;"></div>
<div class="t" style="top:471.59px;font-size:12.65px;line-height:12.65px;color:#444;left:30.0px;width:70px;text-align:center;transform-origin:50% 0;transform:scaleX(0.9091);">Type</div>
<div class="t" style="top:471.59px;font-size:12.65px;line-height:12.65px;color:#333;font-weight:bold;left:100.0px;width:317px;text-align:center;transform-origin:50% 0;transform:scaleX(0.9091);">Port Name or Coordinates</div>
<div class="t" style="top:471.59px;font-size:12.65px;line-height:12.65px;color:#444;left:417.0px;width:137px;text-align:center;transform-origin:50% 0;transform:scaleX(0.9091);">Distance (TTL / ECA)</div>
<div class="t" style="top:471.59px;font-size:12.65px;line-height:12.65px;color:#444;left:554.0px;width:49px;text-align:center;transform-origin:50% 0;transform:scaleX(0.9091);">W.F</div>
<div class="t" style="top:471.59px;font-size:12.65px;line-height:12.65px;color:#444;left:603.0px;width:45px;text-align:center;transform-origin:50% 0;transform:scaleX(0.9091);">Spd</div>
<div class="t" style="top:471.59px;font-size:12.65px;line-height:12.65px;color:#444;left:648.0px;width:60px;text-align:center;transform-origin:50% 0;transform:scaleX(0.9091);">Sea</div>
<div class="t" style="top:471.59px;font-size:12.65px;line-height:12.65px;color:#444;left:708.0px;width:98px;text-align:center;transform-origin:50% 0;transform:scaleX(0.9091);">L / D Rate</div>
<div class="t" style="top:471.59px;font-size:12.65px;line-height:12.65px;color:#444;left:806.0px;width:147px;text-align:center;transform-origin:50% 0;transform:scaleX(0.9091);">Port (I / W)</div>
<div class="t" style="top:471.59px;font-size:12.65px;line-height:12.65px;color:#444;left:953.0px;width:83px;text-align:center;transform-origin:50% 0;transform:scaleX(0.9091);">Dem</div>
<div class="t" style="top:471.59px;font-size:12.65px;line-height:12.65px;color:#444;left:1036.0px;width:83px;text-align:center;transform-origin:50% 0;transform:scaleX(0.9091);">Des</div>
<div class="t" style="top:471.59px;font-size:12.65px;line-height:12.65px;color:#444;left:1119.0px;width:94px;text-align:center;transform-origin:50% 0;transform:scaleX(0.9091);">Port Charge</div>
<div class="t" style="top:471.59px;font-size:12.65px;line-height:12.65px;color:#444;left:1213.0px;width:127px;text-align:center;transform-origin:50% 0;transform:scaleX(0.9091);">Arrival</div>
<div class="t" style="top:471.59px;font-size:12.65px;line-height:12.65px;color:#444;left:1340.0px;width:129px;text-align:center;transform-origin:50% 0;transform:scaleX(0.9091);">Departure</div>
<div class="t" style="top:491.89px;font-size:12.65px;line-height:12.65px;color:#444;left:9.0px;width:20px;text-align:center;transform-origin:50% 0;transform:scaleX(0.9091);">1</div>
<div class="t" style="top:512.89px;font-size:12.65px;line-height:12.65px;color:#444;left:9.0px;width:20px;text-align:center;transform-origin:50% 0;transform:scaleX(0.9091);">2</div>
<div class="t" style="top:533.39px;font-size:12.65px;line-height:12.65px;color:#444;left:9.0px;width:20px;text-align:center;transform-origin:50% 0;transform:scaleX(0.9091);">3</div>
<div class="t" style="top:553.89px;font-size:12.65px;line-height:12.65px;color:#444;left:9.0px;width:20px;text-align:center;transform-origin:50% 0;transform:scaleX(0.9091);">4</div>
<div class="t" style="top:574.89px;font-size:12.65px;line-height:12.65px;color:#444;left:9.0px;width:20px;text-align:center;transform-origin:50% 0;transform:scaleX(0.9091);">5</div>
<div class="t" style="top:595.30px;font-size:12.76px;line-height:12.76px;color:#3a3a3a;left:34px;transform-origin:0 0;transform:scaleX(0.9091);">Margin</div>
<div class="t" style="top:491.80px;font-size:12.76px;line-height:12.76px;color:#3a3a3a;left:34px;transform-origin:0 0;transform:scaleX(0.9091);">Ballast</div>
<div class="t" style="top:491.80px;font-size:12.76px;line-height:12.76px;color:#3a3a3a;left:105px;transform-origin:0 0;transform:scaleX(0.9091);">Singapore &lt;Singapore&gt; [+08:00]</div>
<div class="t" style="top:512.80px;font-size:12.76px;line-height:12.76px;color:#3a3a3a;left:34px;transform-origin:0 0;transform:scaleX(0.9091);">Loading</div>
<div class="t" style="top:512.80px;font-size:12.76px;line-height:12.76px;color:#3a3a3a;left:105px;transform-origin:0 0;transform:scaleX(0.9091);">Banjarmasin &lt;Indonesia&gt; [+08:00]</div>
<div class="t" style="top:533.30px;font-size:12.76px;line-height:12.76px;color:#3a3a3a;left:34px;transform-origin:0 0;transform:scaleX(0.9091);">Canal</div>
<div class="t" style="top:533.30px;font-size:12.76px;line-height:12.76px;color:#3a3a3a;left:105px;transform-origin:0 0;transform:scaleX(0.9091);">Suez Canal (RP) &lt;Egypt&gt; [+02:00]</div>
<div class="t" style="top:553.80px;font-size:12.76px;line-height:12.76px;color:#3a3a3a;left:34px;transform-origin:0 0;transform:scaleX(0.9091);">Dischg.</div>
<div class="t" style="top:553.80px;font-size:12.76px;line-height:12.76px;color:#3a3a3a;left:105px;transform-origin:0 0;transform:scaleX(0.9091);">Ravenna &lt;Italy&gt; [+01:00]</div>
<svg class="a" style="left:325.5px;top:489.5px;" width="14" height="14" viewBox="0 0 14 14"><circle cx="7" cy="7" r="6.6" fill="#3d7fd0"/><rect x="6" y="5.8" width="2.1" height="5.2" fill="#fff"/><circle cx="7.05" cy="3.6" r="1.15" fill="#fff"/></svg>
<svg class="a" style="left:325.5px;top:510.5px;" width="14" height="14" viewBox="0 0 14 14"><circle cx="7" cy="7" r="6.6" fill="#3d7fd0"/><rect x="6" y="5.8" width="2.1" height="5.2" fill="#fff"/><circle cx="7.05" cy="3.6" r="1.15" fill="#fff"/></svg>
<svg class="a" style="left:325.5px;top:551.5px;" width="14" height="14" viewBox="0 0 14 14"><circle cx="7" cy="7" r="6.6" fill="#3d7fd0"/><rect x="6" y="5.8" width="2.1" height="5.2" fill="#fff"/><circle cx="7.05" cy="3.6" r="1.15" fill="#fff"/></svg>
<svg class="a" style="left:306px;top:510.5px;" width="14" height="14" viewBox="0 0 14 14"><circle cx="5.3" cy="4.9" r="4.75" fill="none" stroke="#555" stroke-width="1.25"/><line x1="8.7" y1="8.4" x2="12.6" y2="12.3" stroke="#555" stroke-width="1.6" stroke-linecap="round"/></svg>
<svg class="a" style="left:306px;top:551.5px;" width="14" height="14" viewBox="0 0 14 14"><circle cx="5.3" cy="4.9" r="4.75" fill="none" stroke="#555" stroke-width="1.25"/><line x1="8.7" y1="8.4" x2="12.6" y2="12.3" stroke="#555" stroke-width="1.6" stroke-linecap="round"/></svg>
<svg class="a" style="left:327px;top:530.5px;" width="15" height="16" viewBox="0 0 15 16"><circle cx="6" cy="2.5" r="1.7" fill="none" stroke="#3d7fd0" stroke-width="1.2"/><path d="M6 4 L6 14 M3.5 7 L8.5 7 M1.5 10 C2 13 4 14 6 14 C8 14 10 13 10.5 10" fill="none" stroke="#3d7fd0" stroke-width="1.5"/><rect x="9" y="9" width="5.5" height="6.5" rx="1" fill="#f0922e"/><path d="M9 11 L14.5 11 M9 13 L14.5 13" stroke="#fff" stroke-width=".7"/></svg>
<svg class="a" style="left:326px;top:573.5px;" width="13" height="13" viewBox="0 0 13 13"><path d="M1 12 L1.8 8.6 L8.8 1.6 L11.4 4.2 L4.4 11.2 Z" fill="#2a78d8"/><path d="M9.6 0.8 L10.4 0 L13 2.6 L12.2 3.4 Z" fill="#2a78d8"/></svg>
<svg class="a" style="left:348px;top:510.0px;" width="17" height="13" viewBox="0 0 17 13"><circle cx="2.5" cy="10.5" r="1.8" fill="none" stroke="#c8c8c8"/><circle cx="8" cy="7" r="1.8" fill="none" stroke="#c8c8c8"/><circle cx="14" cy="2.5" r="1.8" fill="none" stroke="#c8c8c8"/><path d="M4 9.5 L6.5 8 M9.5 6 L12.5 3.5" stroke="#c8c8c8"/></svg>
<svg class="a" style="left:348px;top:531.0px;" width="17" height="13" viewBox="0 0 17 13"><circle cx="2.5" cy="10.5" r="1.8" fill="none" stroke="#c8c8c8"/><circle cx="8" cy="7" r="1.8" fill="none" stroke="#c8c8c8"/><circle cx="14" cy="2.5" r="1.8" fill="none" stroke="#c8c8c8"/><path d="M4 9.5 L6.5 8 M9.5 6 L12.5 3.5" stroke="#c8c8c8"/></svg>
<svg class="a" style="left:375px;top:489.5px;" width="11" height="14" viewBox="0 0 11 14"><path d="M5.5 0.5 C2.5 0.5 0.8 2.6 0.8 5 C0.8 8 5.5 13 5.5 13 C5.5 13 10.2 8 10.2 5 C10.2 2.6 8.5 0.5 5.5 0.5 Z" fill="#c8c8c8"/><circle cx="5.5" cy="5" r="2" fill="#fff"/></svg>
<svg class="a" style="left:375px;top:510.5px;" width="11" height="14" viewBox="0 0 11 14"><path d="M5.5 0.5 C2.5 0.5 0.8 2.6 0.8 5 C0.8 8 5.5 13 5.5 13 C5.5 13 10.2 8 10.2 5 C10.2 2.6 8.5 0.5 5.5 0.5 Z" fill="#c8c8c8"/><circle cx="5.5" cy="5" r="2" fill="#fff"/></svg>
<svg class="a" style="left:375px;top:531.5px;" width="11" height="14" viewBox="0 0 11 14"><path d="M5.5 0.5 C2.5 0.5 0.8 2.6 0.8 5 C0.8 8 5.5 13 5.5 13 C5.5 13 10.2 8 10.2 5 C10.2 2.6 8.5 0.5 5.5 0.5 Z" fill="#c8c8c8"/><circle cx="5.5" cy="5" r="2" fill="#fff"/></svg>
<svg class="a" style="left:374px;top:550.5px;" width="13" height="15" viewBox="0 0 13 15"><path d="M6.5 0.8 C4 0.8 2.3 2.7 2.3 4.8 C2.3 7.5 6.5 11 6.5 11 C6.5 11 10.7 7.5 10.7 4.8 C10.7 2.7 9 0.8 6.5 0.8 Z" fill="#4cb35a"/><circle cx="6.5" cy="4.8" r="1.8" fill="#fff"/><path d="M0.5 14.5 L2.5 10.5 L10.5 10.5 L12.5 14.5 Z" fill="#8ab8ea"/></svg>
<svg class="a" style="left:397px;top:511.5px;" width="15" height="11" viewBox="0 0 15 11"><path d="M1 10 A6.5 6.5 0 0 1 14 10" fill="none" stroke="#a8a8a8" stroke-width="1.3"/><path d="M3.5 10 A4 4 0 0 1 11.5 10" fill="none" stroke="#a8a8a8" stroke-width="0.8"/><line x1="7.5" y1="10" x2="10" y2="5" stroke="#a8a8a8" stroke-width="1.2"/><line x1="1" y1="10.3" x2="14" y2="10.3" stroke="#a8a8a8" stroke-width="1"/></svg>
<svg class="a" style="left:397px;top:532.5px;" width="15" height="11" viewBox="0 0 15 11"><path d="M1 10 A6.5 6.5 0 0 1 14 10" fill="none" stroke="#a8a8a8" stroke-width="1.3"/><path d="M3.5 10 A4 4 0 0 1 11.5 10" fill="none" stroke="#a8a8a8" stroke-width="0.8"/><line x1="7.5" y1="10" x2="10" y2="5" stroke="#a8a8a8" stroke-width="1.2"/><line x1="1" y1="10.3" x2="14" y2="10.3" stroke="#a8a8a8" stroke-width="1"/></svg>
<svg class="a" style="left:397px;top:552.5px;" width="15" height="11" viewBox="0 0 15 11"><path d="M1 10 A6.5 6.5 0 0 1 14 10" fill="none" stroke="#a8a8a8" stroke-width="1.3"/><path d="M3.5 10 A4 4 0 0 1 11.5 10" fill="none" stroke="#a8a8a8" stroke-width="0.8"/><line x1="7.5" y1="10" x2="10" y2="5" stroke="#a8a8a8" stroke-width="1.2"/><line x1="1" y1="10.3" x2="14" y2="10.3" stroke="#a8a8a8" stroke-width="1"/></svg>
<div class="t" style="top:512.80px;font-size:12.76px;line-height:12.76px;color:#3a3a3a;left:82px;width:400px;text-align:right;transform-origin:100% 0;transform:scaleX(0.9091);">791</div>
<div class="t" style="top:533.30px;font-size:12.76px;line-height:12.76px;color:#3a3a3a;left:82px;width:400px;text-align:right;transform-origin:100% 0;transform:scaleX(0.9091);">5,746</div>
<div class="t" style="top:553.80px;font-size:12.76px;line-height:12.76px;color:#3a3a3a;left:82px;width:400px;text-align:right;transform-origin:100% 0;transform:scaleX(0.9091);">1,356</div>
<div class="t" style="top:512.80px;font-size:12.76px;line-height:12.76px;color:#3a3a3a;left:150px;width:400px;text-align:right;transform-origin:100% 0;transform:scaleX(0.9091);">0</div>
<div class="t" style="top:533.30px;font-size:12.76px;line-height:12.76px;color:#3a3a3a;left:150px;width:400px;text-align:right;transform-origin:100% 0;transform:scaleX(0.9091);">0</div>
<div class="t" style="top:553.80px;font-size:12.76px;line-height:12.76px;color:#3a3a3a;left:150px;width:400px;text-align:right;transform-origin:100% 0;transform:scaleX(0.9091);">1,262</div>
<div class="t" style="top:512.80px;font-size:12.76px;line-height:12.76px;color:#e8141b;left:199px;width:400px;text-align:right;transform-origin:100% 0;transform:scaleX(0.9091);">5.0 %</div>
<div class="t" style="top:533.30px;font-size:12.76px;line-height:12.76px;color:#3a3a3a;left:199px;width:400px;text-align:right;transform-origin:100% 0;transform:scaleX(0.9091);">0.0 %</div>
<div class="t" style="top:553.80px;font-size:12.76px;line-height:12.76px;color:#3a3a3a;left:199px;width:400px;text-align:right;transform-origin:100% 0;transform:scaleX(0.9091);">0.0 %</div>
<div class="t" style="top:512.80px;font-size:12.76px;line-height:12.76px;color:#3a3a3a;left:244px;width:400px;text-align:right;transform-origin:100% 0;transform:scaleX(0.9091);">14.50</div>
<div class="t" style="top:533.30px;font-size:12.76px;line-height:12.76px;color:#3a3a3a;left:244px;width:400px;text-align:right;transform-origin:100% 0;transform:scaleX(0.9091);">14.00</div>
<div class="t" style="top:553.80px;font-size:12.76px;line-height:12.76px;color:#3a3a3a;left:244px;width:400px;text-align:right;transform-origin:100% 0;transform:scaleX(0.9091);">14.00</div>
<div class="t" style="top:512.80px;font-size:12.76px;line-height:12.76px;color:#111;left:305px;width:400px;text-align:right;transform-origin:100% 0;transform:scaleX(0.9091);">2.39</div>
<div class="t" style="top:533.30px;font-size:12.76px;line-height:12.76px;color:#111;left:305px;width:400px;text-align:right;transform-origin:100% 0;transform:scaleX(0.9091);">17.10</div>
<div class="t" style="top:553.80px;font-size:12.76px;line-height:12.76px;color:#111;left:305px;width:400px;text-align:right;transform-origin:100% 0;transform:scaleX(0.9091);">4.04</div>
<svg class="a" style="left:711px;top:510.5px;" width="14" height="14" viewBox="0 0 14 14"><circle cx="5.3" cy="4.9" r="4.75" fill="none" stroke="#555" stroke-width="1.25"/><line x1="8.7" y1="8.4" x2="12.6" y2="12.3" stroke="#555" stroke-width="1.6" stroke-linecap="round"/></svg>
<svg class="a" style="left:711px;top:551.5px;" width="14" height="14" viewBox="0 0 14 14"><circle cx="5.3" cy="4.9" r="4.75" fill="none" stroke="#555" stroke-width="1.25"/><line x1="8.7" y1="8.4" x2="12.6" y2="12.3" stroke="#555" stroke-width="1.6" stroke-linecap="round"/></svg>
<div class="t" style="top:512.80px;font-size:12.76px;line-height:12.76px;color:#3a3a3a;left:402.5px;width:400px;text-align:right;transform-origin:100% 0;transform:scaleX(0.9091);">12,000.00</div>
<div class="t" style="top:553.80px;font-size:12.76px;line-height:12.76px;color:#3a3a3a;left:402.5px;width:400px;text-align:right;transform-origin:100% 0;transform:scaleX(0.9091);">15,000.00</div>
<div class="t" style="top:512.80px;font-size:12.76px;line-height:12.76px;color:#3a3a3a;left:463.5px;width:400px;text-align:right;transform-origin:100% 0;transform:scaleX(0.9091);">0.50</div>
<div class="t" style="top:533.30px;font-size:12.76px;line-height:12.76px;color:#3a3a3a;left:463.5px;width:400px;text-align:right;transform-origin:100% 0;transform:scaleX(0.9091);">0.21</div>
<div class="t" style="top:553.80px;font-size:12.76px;line-height:12.76px;color:#3a3a3a;left:463.5px;width:400px;text-align:right;transform-origin:100% 0;transform:scaleX(0.9091);">0.50</div>
<div class="t" style="top:512.80px;font-size:12.76px;line-height:12.76px;color:#3a3a3a;left:524.5px;width:400px;text-align:right;transform-origin:100% 0;transform:scaleX(0.9091);">4.58</div>
<div class="t" style="top:553.80px;font-size:12.76px;line-height:12.76px;color:#3a3a3a;left:524.5px;width:400px;text-align:right;transform-origin:100% 0;transform:scaleX(0.9091);">3.67</div>
<svg class="a" style="left:934px;top:510.5px;" width="12" height="15" viewBox="0 0 12 15"><path d="M1 3 L11 3 M6 1 L6 14 M3 1.5 L1 3 L3 4.5 M9 1.5 L11 3 L9 4.5" fill="none" stroke="#b0b0b0" stroke-width="1.3"/><path d="M8 8 A2 2 0 0 1 10 10" stroke="#b0b0b0" fill="none"/></svg>
<svg class="a" style="left:934px;top:551.5px;" width="12" height="15" viewBox="0 0 12 15"><path d="M1 3 L11 3 M6 1 L6 14 M3 1.5 L1 3 L3 4.5 M9 1.5 L11 3 L9 4.5" fill="none" stroke="#b0b0b0" stroke-width="1.3"/><path d="M8 8 A2 2 0 0 1 10 10" stroke="#b0b0b0" fill="none"/></svg>
<div class="t" style="top:512.80px;font-size:12.76px;line-height:12.76px;color:#3a3a3a;left:716px;width:400px;text-align:right;transform-origin:100% 0;transform:scaleX(0.9091);">3,750.00</div>
<div class="t" style="top:553.80px;font-size:12.76px;line-height:12.76px;color:#3a3a3a;left:716px;width:400px;text-align:right;transform-origin:100% 0;transform:scaleX(0.9091);">3,750.00</div>
<svg class="a" style="left:1122px;top:510.5px;" width="14" height="14" viewBox="0 0 14 14"><circle cx="5.3" cy="4.9" r="4.75" fill="none" stroke="#555" stroke-width="1.25"/><line x1="8.7" y1="8.4" x2="12.6" y2="12.3" stroke="#555" stroke-width="1.6" stroke-linecap="round"/></svg>
<svg class="a" style="left:1122px;top:531.5px;" width="14" height="14" viewBox="0 0 14 14"><circle cx="5.3" cy="4.9" r="4.75" fill="none" stroke="#555" stroke-width="1.25"/><line x1="8.7" y1="8.4" x2="12.6" y2="12.3" stroke="#555" stroke-width="1.6" stroke-linecap="round"/></svg>
<svg class="a" style="left:1122px;top:551.5px;" width="14" height="14" viewBox="0 0 14 14"><circle cx="5.3" cy="4.9" r="4.75" fill="none" stroke="#555" stroke-width="1.25"/><line x1="8.7" y1="8.4" x2="12.6" y2="12.3" stroke="#555" stroke-width="1.6" stroke-linecap="round"/></svg>
<div class="t" style="top:512.80px;font-size:12.76px;line-height:12.76px;color:#3a3a3a;left:809px;width:400px;text-align:right;transform-origin:100% 0;transform:scaleX(0.9091);">15,000.00</div>
<div class="t" style="top:533.30px;font-size:12.76px;line-height:12.76px;color:#3a3a3a;left:809px;width:400px;text-align:right;transform-origin:100% 0;transform:scaleX(0.9091);">9,000.00</div>
<div class="t" style="top:553.80px;font-size:12.76px;line-height:12.76px;color:#3a3a3a;left:809px;width:400px;text-align:right;transform-origin:100% 0;transform:scaleX(0.9091);">50,000.00</div>
<div class="t" style="top:512.80px;font-size:12.76px;line-height:12.76px;color:#3a3a3a;left:1217.5px;transform-origin:0 0;transform:scaleX(0.9091);">2025-05-01 19:16</div>
<div class="t" style="top:533.30px;font-size:12.76px;line-height:12.76px;color:#3a3a3a;left:1217.5px;transform-origin:0 0;transform:scaleX(0.9091);">2025-05-23 17:41</div>
<div class="t" style="top:553.80px;font-size:12.76px;line-height:12.76px;color:#3a3a3a;left:1217.5px;transform-origin:0 0;transform:scaleX(0.9091);">2025-05-27 22:32</div>
<div class="t" style="top:491.80px;font-size:12.76px;line-height:12.76px;color:#3a3a3a;left:1345px;transform-origin:0 0;transform:scaleX(0.9091);">2025-04-29 10:00</div>
<div class="t" style="top:512.80px;font-size:12.76px;line-height:12.76px;color:#3a3a3a;left:1345px;transform-origin:0 0;transform:scaleX(0.9091);">2025-05-06 21:16</div>
<div class="t" style="top:533.30px;font-size:12.76px;line-height:12.76px;color:#3a3a3a;left:1345px;transform-origin:0 0;transform:scaleX(0.9091);">2025-05-23 22:41</div>
<div class="t" style="top:553.80px;font-size:12.76px;line-height:12.76px;color:#3a3a3a;left:1345px;transform-origin:0 0;transform:scaleX(0.9091);">2025-06-01 02:32</div>
<svg class="a" style="left:1451px;top:489.0px;" width="14" height="14" viewBox="0 0 14 14"><rect x="0.5" y="2" width="13" height="11.5" fill="#fff" stroke="#d9534f"/><rect x="0.5" y="2" width="13" height="3" fill="#e0413a"/><rect x="3" y="0" width="1.4" height="3" fill="#d9534f"/><rect x="9.6" y="0" width="1.4" height="3" fill="#d9534f"/><rect x="2.5" y="6.8" width="1.3" height="1.2" fill="#666"/><rect x="2.5" y="9.2" width="1.3" height="1.2" fill="#666"/><rect x="2.5" y="11.6" width="1.3" height="1.2" fill="#666"/><rect x="5.1" y="6.8" width="1.3" height="1.2" fill="#666"/><rect x="5.1" y="9.2" width="1.3" height="1.2" fill="#666"/><rect x="5.1" y="11.6" width="1.3" height="1.2" fill="#666"/><rect x="7.7" y="6.8" width="1.3" height="1.2" fill="#666"/><rect x="7.7" y="9.2" width="1.3" height="1.2" fill="#666"/><rect x="7.7" y="11.6" width="1.3" height="1.2" fill="#666"/><rect x="10.3" y="6.8" width="1.3" height="1.2" fill="#666"/><rect x="10.3" y="9.2" width="1.3" height="1.2" fill="#666"/><rect x="10.3" y="11.6" width="1.3" height="1.2" fill="#666"/></svg>
<svg class="a" style="left:650px;top:593.5px;" width="14" height="14" viewBox="0 0 14 14"><circle cx="5.3" cy="4.9" r="4.75" fill="none" stroke="#555" stroke-width="1.25"/><line x1="8.7" y1="8.4" x2="12.6" y2="12.3" stroke="#555" stroke-width="1.6" stroke-linecap="round"/></svg>
<svg class="a" style="left:809px;top:593.5px;" width="14" height="14" viewBox="0 0 14 14"><circle cx="5.3" cy="4.9" r="4.75" fill="none" stroke="#555" stroke-width="1.25"/><line x1="8.7" y1="8.4" x2="12.6" y2="12.3" stroke="#555" stroke-width="1.6" stroke-linecap="round"/></svg>
<svg class="a" style="left:870px;top:593.5px;" width="14" height="14" viewBox="0 0 14 14"><circle cx="5.3" cy="4.9" r="4.75" fill="none" stroke="#555" stroke-width="1.25"/><line x1="8.7" y1="8.4" x2="12.6" y2="12.3" stroke="#555" stroke-width="1.6" stroke-linecap="round"/></svg>
<div class="a" style="left:30.5px;top:618px;width:21px;height:18px;background:#f6f6f6;border:1px solid #d2d2d2;box-sizing:border-box;"></div>
<svg class="a" style="left:32.5px;top:618.5px;" width="17" height="17" viewBox="0 0 17 17"><rect x="4" y="5" width="9" height="10" fill="#444"/><rect x="3" y="3" width="11" height="1.6" fill="#444"/><rect x="6.5" y="1.5" width="4" height="1.6" fill="#444"/></svg>
<div class="a" style="left:54.4px;top:618px;width:21px;height:18px;background:#f6f6f6;border:1px solid #d2d2d2;box-sizing:border-box;"></div>
<svg class="a" style="left:56.4px;top:618.5px;" width="17" height="17" viewBox="0 0 17 17"><circle cx="8.5" cy="8.5" r="6.5" fill="#4cb35a"/><rect x="7.3" y="4.5" width="2.4" height="8" fill="#fff"/><rect x="4.5" y="7.3" width="8" height="2.4" fill="#fff"/></svg>
<div class="a" style="left:77.7px;top:618px;width:21px;height:18px;background:#f6f6f6;border:1px solid #d2d2d2;box-sizing:border-box;"></div>
<svg class="a" style="left:79.7px;top:618.5px;" width="17" height="17" viewBox="0 0 17 17"><rect x="2" y="6" width="5" height="3" fill="#3d7fd0"/><path d="M7.5 7.5 L11 7.5" stroke="#4cb35a" stroke-width="1.2"/><path d="M10 5.5 L12 7.5 L10 9.5" fill="#4cb35a"/><rect x="12" y="1" width="4" height="2.5" fill="#aaa"/><rect x="12" y="11" width="4" height="2.5" fill="#aaa"/><rect x="12" y="14.5" width="4" height="2" fill="#aaa"/></svg>
<div class="a" style="left:100.4px;top:618px;width:21px;height:18px;background:#f6f6f6;border:1px solid #d2d2d2;box-sizing:border-box;"></div>
<svg class="a" style="left:102.4px;top:618.5px;" width="17" height="17" viewBox="0 0 17 17"><path d="M2 8.5 L5 7 L5 10 Z" fill="#444"/><rect x="5" y="7.8" width="2" height="1.4" fill="#444"/><rect x="7.5" y="6.5" width="8" height="4" fill="#444"/><rect x="8" y="2" width="3" height="2.5" fill="#aaa"/><rect x="12" y="2" width="3" height="2.5" fill="#aaa"/><rect x="8" y="12.5" width="3" height="2.5" fill="#aaa"/><rect x="12" y="12.5" width="3" height="2.5" fill="#aaa"/></svg>
<div class="a" style="left:124.7px;top:618px;width:21px;height:18px;background:#f6f6f6;border:1px solid #d2d2d2;box-sizing:border-box;"></div>
<svg class="a" style="left:126.7px;top:618.5px;" width="17" height="17" viewBox="0 0 17 17"><rect x="2" y="2" width="3.5" height="2.5" fill="#aaa"/><rect x="7" y="2" width="3.5" height="2.5" fill="#aaa"/><rect x="12" y="2" width="3.5" height="2.5" fill="#aaa"/><rect x="2" y="7" width="13.5" height="3" fill="#3d7fd0"/><rect x="2" y="12.5" width="3.5" height="2.5" fill="#aaa"/><rect x="7" y="12.5" width="3.5" height="2.5" fill="#aaa"/><rect x="12" y="12.5" width="3.5" height="2.5" fill="#aaa"/><path d="M7.5 4.5 L10 4.5 L8.75 2.5 Z" fill="#4cb35a"/></svg>
<div class="a" style="left:148.2px;top:618px;width:21px;height:18px;background:#f6f6f6;border:1px solid #d2d2d2;box-sizing:border-box;"></div>
<svg class="a" style="left:150.2px;top:618.5px;" width="17" height="17" viewBox="0 0 17 17"><rect x="2" y="2" width="3.5" height="2.5" fill="#aaa"/><rect x="7" y="2" width="3.5" height="2.5" fill="#aaa"/><rect x="12" y="2" width="3.5" height="2.5" fill="#aaa"/><rect x="2" y="6.5" width="13.5" height="3" fill="#3d7fd0"/><rect x="2" y="12.5" width="3.5" height="2.5" fill="#aaa"/><rect x="12" y="12.5" width="3.5" height="2.5" fill="#aaa"/><path d="M7.5 12 L10 12 L8.75 14.5 Z" fill="#4cb35a"/></svg>
<div class="t" style="top:623.30px;font-size:12.76px;line-height:12.76px;color:#3a3a3a;font-weight:bold;left:82px;width:400px;text-align:right;transform-origin:100% 0;transform:scaleX(0.9091);">7,893</div>
<div class="t" style="top:623.30px;font-size:12.76px;line-height:12.76px;color:#3a3a3a;font-weight:bold;left:150px;width:400px;text-align:right;transform-origin:100% 0;transform:scaleX(0.9091);">1,262</div>
<div class="t" style="top:623.30px;font-size:12.76px;line-height:12.76px;color:#3a3a3a;left:305.5px;width:400px;text-align:right;transform-origin:100% 0;transform:scaleX(0.9091);">23.52</div>
<div class="t" style="top:623.30px;font-size:12.76px;line-height:12.76px;color:#3a3a3a;left:463.5px;width:400px;text-align:right;transform-origin:100% 0;transform:scaleX(0.9091);">1.21</div>
<div class="t" style="top:623.30px;font-size:12.76px;line-height:12.76px;color:#3a3a3a;left:524.5px;width:400px;text-align:right;transform-origin:100% 0;transform:scaleX(0.9091);">8.25</div>
<div class="t" style="top:623.30px;font-size:12.76px;line-height:12.76px;color:#3a3a3a;left:632.5px;width:400px;text-align:right;transform-origin:100% 0;transform:scaleX(0.9091);">0.00</div>
<div class="t" style="top:623.30px;font-size:12.76px;line-height:12.76px;color:#3a3a3a;left:716px;width:400px;text-align:right;transform-origin:100% 0;transform:scaleX(0.9091);">7,500.00</div>
<div class="t" style="top:623.30px;font-size:12.76px;line-height:12.76px;color:#3a3a3a;left:809px;width:400px;text-align:right;transform-origin:100% 0;transform:scaleX(0.9091);">74,000.00</div>
<div class="t" style="top:620.33px;font-size:13.31px;line-height:13.31px;color:#222;font-weight:bold;left:1218.5px;transform-origin:0 0;transform:scaleX(0.9091);">2025-04-29 10:00</div>
<div class="t" style="top:620.33px;font-size:13.31px;line-height:13.31px;color:#222;font-weight:bold;left:1346px;transform-origin:0 0;transform:scaleX(0.9091);">2025-06-01 02:32</div>
<div class="a" style="left:8px;top:650px;width:115px;height:22px;background:#fff;border:1px solid #3d7fd0;box-sizing:border-box;"></div>
<div class="t" style="top:655.59px;font-size:12.65px;line-height:12.65px;color:#333;font-weight:bold;left:8.0px;width:115px;text-align:center;transform-origin:50% 0;transform:scaleX(0.9091);">Get Distance (F9)</div>
<div class="a" style="left:129px;top:650px;width:116px;height:22px;background:#fff;border:1px solid #d5d5d5;box-sizing:border-box;"></div>
<div class="t" style="top:655.59px;font-size:12.65px;line-height:12.65px;color:#333;font-weight:bold;left:129.0px;width:116px;text-align:center;transform-origin:50% 0;transform:scaleX(0.9091);">To Distance (F10)</div>
<div class="a" style="left:250px;top:650px;width:94px;height:22px;background:#fff;border:1px solid #d5d5d5;box-sizing:border-box;"></div>
<div class="t" style="top:655.59px;font-size:12.65px;line-height:12.65px;color:#333;font-weight:bold;left:250.0px;width:94px;text-align:center;transform-origin:50% 0;transform:scaleX(0.9091);">To Operation</div>
<div class="a" style="left:1101px;top:651px;width:58px;height:21px;background:#fff;border:1px solid #d5d5d5;box-sizing:border-box;"></div>
<div class="t" style="top:656.20px;font-size:12.76px;line-height:12.76px;color:#444;left:1106px;transform-origin:0 0;transform:scaleX(0.9091);">Days</div>
<svg class="a" style="left:1144px;top:659px;" width="9" height="5" viewBox="0 0 9 5"><path d="M0 0 L9 0 L4.5 5 Z" fill="#333"/></svg>
<div class="a" style="left:1164px;top:651px;width:94px;height:21px;background:#91bbe6;border:1px solid #91bbe6;box-sizing:border-box;"></div>
<svg class="a" style="left:1176px;top:654px;" width="15" height="15" viewBox="0 0 15 15"><circle cx="7.5" cy="7.5" r="7" fill="#3d7fd0"/><path d="M4 3 C6 4 5 6 7 7 C9 8 8 10 6 12 M10 2.5 C9 4 11 5 12.5 5" fill="none" stroke="#8fb6e6" stroke-width="1.6"/></svg>
<div class="t" style="top:656.20px;font-size:12.76px;line-height:12.76px;color:#333;left:1196px;transform-origin:0 0;transform:scaleX(0.9091);">Port Local</div>
<div class="a" style="left:1263px;top:651px;width:83px;height:21px;background:#fff;border:1px solid #d5d5d5;box-sizing:border-box;"></div>
<svg class="a" style="left:1273px;top:655px;" width="16" height="14" viewBox="0 0 16 14"><rect x="1" y="1" width="14" height="9" fill="none" stroke="#444" stroke-width="1.3"/><rect x="7" y="10" width="2" height="2.5" fill="#444"/><rect x="4" y="12.5" width="8" height="1.3" fill="#444"/></svg>
<div class="t" style="top:656.20px;font-size:12.76px;line-height:12.76px;color:#333;left:1294px;transform-origin:0 0;transform:scaleX(0.9091);">PC Time</div>
<div class="a" style="left:1352px;top:651px;width:117px;height:21px;background:#fff;border:1px solid #d5d5d5;box-sizing:border-box;"></div>
<div class="t" style="top:656.20px;font-size:12.76px;line-height:12.76px;color:#444;left:1357px;transform-origin:0 0;transform:scaleX(0.9091);">Port local time</div>
<svg class="a" style="left:1455px;top:659px;" width="9" height="5" viewBox="0 0 9 5"><path d="M0 0 L9 0 L4.5 5 Z" fill="#333"/></svg>
<div class="t" style="top:692.68px;font-size:15.73px;line-height:15.73px;color:#9e4015;font-weight:bold;left:8px;transform-origin:0 0;transform:scaleX(0.9091);">Operation Expense</div>
<div class="a" style="left:9px;top:713px;width:119px;height:20px;background:#f3f3f3;"></div>
<div class="a" style="left:128px;top:713px;width:130px;height:20px;background:#fffde2;"></div>
<div class="a" style="left:258px;top:713px;width:119px;height:20px;background:#f3f3f3;"></div>
<div class="a" style="left:377px;top:713px;width:130px;height:20px;background:#fffde2;"></div>
<div class="a" style="left:9px;top:733px;width:119px;height:21px;background:#f3f3f3;"></div>
<div class="a" style="left:128px;top:733px;width:130px;height:21px;background:#fffde2;"></div>
<div class="a" style="left:258px;top:733px;width:119px;height:21px;background:#f3f3f3;"></div>
<div class="a" style="left:377px;top:733px;width:130px;height:21px;background:#fffde2;"></div>
<div class="a" style="left:9px;top:754px;width:119px;height:20px;background:#f3f3f3;"></div>
<div class="a" style="left:128px;top:754px;width:130px;height:20px;background:#fffde2;"></div>
<div class="a" style="left:258px;top:754px;width:119px;height:20px;background:#f3f3f3;"></div>
<div class="a" style="left:377px;top:754px;width:130px;height:20px;background:#fff;"></div>
<div class="a" style="left:9px;top:774px;width:119px;height:21px;background:#f3f3f3;"></div>
<div class="a" style="left:128px;top:774px;width:130px;height:21px;background:#fffde2;"></div>
<div class="a" style="left:258px;top:774px;width:119px;height:21px;background:#f3f3f3;"></div>
<div class="a" style="left:377px;top:774px;width:130px;height:21px;background:#fff;"></div>
<div class="a" style="left:9px;top:795px;width:119px;height:20px;background:#f3f3f3;"></div>
<div class="a" style="left:128px;top:795px;width:130px;height:20px;background:#fffde2;"></div>
<div class="a" style="left:258px;top:795px;width:119px;height:20px;background:#f3f3f3;"></div>
<div class="a" style="left:377px;top:795px;width:130px;height:20px;background:#fffde2;"></div>
<div class="a" style="left:9px;top:815px;width:119px;height:21px;background:#f3f3f3;"></div>
<div class="a" style="left:128px;top:815px;width:130px;height:21px;background:#fffde2;"></div>
<div class="a" style="left:258px;top:815px;width:119px;height:21px;background:#f3f3f3;"></div>
<div class="a" style="left:377px;top:815px;width:130px;height:21px;background:#fffde2;"></div>
<div class="a" style="left:9px;top:713px;width:499px;height:1px;background:#dedede;"></div>
<div class="a" style="left:9px;top:733px;width:499px;height:1px;background:#dedede;"></div>
<div class="a" style="left:9px;top:754px;width:499px;height:1px;background:#dedede;"></div>
<div class="a" style="left:9px;top:774px;width:499px;height:1px;background:#dedede;"></div>
<div class="a" style="left:9px;top:795px;width:499px;height:1px;background:#dedede;"></div>
<div class="a" style="left:9px;top:815px;width:499px;height:1px;background:#dedede;"></div>
<div class="a" style="left:9px;top:836px;width:499px;height:1px;background:#dedede;"></div>
<div class="a" style="left:9px;top:713px;width:1px;height:124px;background:#dedede;"></div>
<div class="a" style="left:128px;top:713px;width:1px;height:124px;background:#dedede;"></div>
<div class="a" style="left:258px;top:713px;width:1px;height:124px;background:#dedede;"></div>
<div class="a" style="left:377px;top:713px;width:1px;height:124px;background:#dedede;"></div>
<div class="a" style="left:507px;top:713px;width:1px;height:124px;background:#dedede;"></div>
<div class="t" style="top:717.70px;font-size:12.76px;line-height:12.76px;color:#444;left:13px;transform-origin:0 0;transform:scaleX(0.9091);">Dem/Des</div>
<svg class="a" style="left:130.5px;top:716.5px;" width="14" height="14" viewBox="0 0 14 14"><circle cx="5.3" cy="4.9" r="4.75" fill="none" stroke="#555" stroke-width="1.25"/><line x1="8.7" y1="8.4" x2="12.6" y2="12.3" stroke="#555" stroke-width="1.6" stroke-linecap="round"/></svg>
<div class="t" style="top:717.70px;font-size:12.76px;line-height:12.76px;color:#3a3a3a;left:-146px;width:400px;text-align:right;transform-origin:100% 0;transform:scaleX(0.9091);">7,500.00</div>
<div class="t" style="top:717.70px;font-size:12.76px;line-height:12.76px;color:#444;left:262px;transform-origin:0 0;transform:scaleX(0.9091);">Bunker Expense</div>
<svg class="a" style="left:379.5px;top:716.5px;" width="14" height="14" viewBox="0 0 14 14"><circle cx="5.3" cy="4.9" r="4.75" fill="none" stroke="#555" stroke-width="1.25"/><line x1="8.7" y1="8.4" x2="12.6" y2="12.3" stroke="#555" stroke-width="1.6" stroke-linecap="round"/></svg>
<div class="t" style="top:717.70px;font-size:12.76px;line-height:12.76px;color:#3a3a3a;left:103px;width:400px;text-align:right;transform-origin:100% 0;transform:scaleX(0.9091);">429,544.97</div>
<div class="t" style="top:738.20px;font-size:12.76px;line-height:12.76px;color:#444;left:13px;transform-origin:0 0;transform:scaleX(0.9091);">Add. Comm.</div>
<svg class="a" style="left:130.5px;top:736.5px;" width="14" height="14" viewBox="0 0 14 14"><circle cx="5.3" cy="4.9" r="4.75" fill="none" stroke="#555" stroke-width="1.25"/><line x1="8.7" y1="8.4" x2="12.6" y2="12.3" stroke="#555" stroke-width="1.6" stroke-linecap="round"/></svg>
<div class="t" style="top:738.20px;font-size:12.76px;line-height:12.76px;color:#3a3a3a;left:-146px;width:400px;text-align:right;transform-origin:100% 0;transform:scaleX(0.9091);">21,656.25</div>
<div class="t" style="top:738.20px;font-size:12.76px;line-height:12.76px;color:#444;left:262px;transform-origin:0 0;transform:scaleX(0.9091);">CEV</div>
<svg class="a" style="left:379.5px;top:736.5px;" width="14" height="14" viewBox="0 0 14 14"><circle cx="5.3" cy="4.9" r="4.75" fill="none" stroke="#555" stroke-width="1.25"/><line x1="8.7" y1="8.4" x2="12.6" y2="12.3" stroke="#555" stroke-width="1.6" stroke-linecap="round"/></svg>
<div class="t" style="top:738.20px;font-size:12.76px;line-height:12.76px;color:#3a3a3a;left:103px;width:400px;text-align:right;transform-origin:100% 0;transform:scaleX(0.9091);">1,649.06</div>
<div class="t" style="top:758.70px;font-size:12.76px;line-height:12.76px;color:#444;left:13px;transform-origin:0 0;transform:scaleX(0.9091);">Brokerage</div>
<svg class="a" style="left:130.5px;top:757.5px;" width="14" height="14" viewBox="0 0 14 14"><circle cx="5.3" cy="4.9" r="4.75" fill="none" stroke="#555" stroke-width="1.25"/><line x1="8.7" y1="8.4" x2="12.6" y2="12.3" stroke="#555" stroke-width="1.6" stroke-linecap="round"/></svg>
<div class="t" style="top:758.70px;font-size:12.76px;line-height:12.76px;color:#3a3a3a;left:-146px;width:400px;text-align:right;transform-origin:100% 0;transform:scaleX(0.9091);">7,218.75</div>
<div class="t" style="top:758.70px;font-size:12.76px;line-height:12.76px;color:#444;left:262px;transform-origin:0 0;transform:scaleX(0.9091);">ILOHC</div>
<svg class="a" style="left:379.5px;top:757.5px;" width="14" height="14" viewBox="0 0 14 14"><circle cx="5.3" cy="4.9" r="4.75" fill="none" stroke="#555" stroke-width="1.25"/><line x1="8.7" y1="8.4" x2="12.6" y2="12.3" stroke="#555" stroke-width="1.6" stroke-linecap="round"/></svg>
<div class="t" style="top:758.70px;font-size:12.76px;line-height:12.76px;color:#3a3a3a;left:103px;width:400px;text-align:right;transform-origin:100% 0;transform:scaleX(0.9091);">5,000.00</div>
<div class="t" style="top:779.20px;font-size:12.76px;line-height:12.76px;color:#444;left:13px;transform-origin:0 0;transform:scaleX(0.9091);">Freight Tax</div>
<svg class="a" style="left:130.5px;top:777.5px;" width="14" height="14" viewBox="0 0 14 14"><circle cx="5.3" cy="4.9" r="4.75" fill="none" stroke="#555" stroke-width="1.25"/><line x1="8.7" y1="8.4" x2="12.6" y2="12.3" stroke="#555" stroke-width="1.6" stroke-linecap="round"/></svg>
<div class="t" style="top:779.20px;font-size:12.76px;line-height:12.76px;color:#3a3a3a;left:-146px;width:400px;text-align:right;transform-origin:100% 0;transform:scaleX(0.9091);">0.00</div>
<div class="t" style="top:779.20px;font-size:12.76px;line-height:12.76px;color:#444;left:262px;transform-origin:0 0;transform:scaleX(0.9091);">Ballast Bonus</div>
<svg class="a" style="left:379.5px;top:777.5px;" width="14" height="14" viewBox="0 0 14 14"><circle cx="5.3" cy="4.9" r="4.75" fill="none" stroke="#555" stroke-width="1.25"/><line x1="8.7" y1="8.4" x2="12.6" y2="12.3" stroke="#555" stroke-width="1.6" stroke-linecap="round"/></svg>
<div class="t" style="top:799.70px;font-size:12.76px;line-height:12.76px;color:#444;left:13px;transform-origin:0 0;transform:scaleX(0.9091);">Liner Terms</div>
<svg class="a" style="left:130.5px;top:798.5px;" width="14" height="14" viewBox="0 0 14 14"><circle cx="5.3" cy="4.9" r="4.75" fill="none" stroke="#555" stroke-width="1.25"/><line x1="8.7" y1="8.4" x2="12.6" y2="12.3" stroke="#555" stroke-width="1.6" stroke-linecap="round"/></svg>
<div class="t" style="top:799.70px;font-size:12.76px;line-height:12.76px;color:#3a3a3a;left:-146px;width:400px;text-align:right;transform-origin:100% 0;transform:scaleX(0.9091);">0.00</div>
<div class="t" style="top:799.70px;font-size:12.76px;line-height:12.76px;color:#444;left:262px;transform-origin:0 0;transform:scaleX(0.9091);">Emission Cost</div>
<svg class="a" style="left:379.5px;top:798.5px;" width="14" height="14" viewBox="0 0 14 14"><circle cx="5.3" cy="4.9" r="4.75" fill="none" stroke="#555" stroke-width="1.25"/><line x1="8.7" y1="8.4" x2="12.6" y2="12.3" stroke="#555" stroke-width="1.6" stroke-linecap="round"/></svg>
<div class="t" style="top:799.70px;font-size:12.76px;line-height:12.76px;color:#3a3a3a;left:103px;width:400px;text-align:right;transform-origin:100% 0;transform:scaleX(0.9091);">0.00</div>
<div class="t" style="top:820.20px;font-size:12.76px;line-height:12.76px;color:#444;left:13px;transform-origin:0 0;transform:scaleX(0.9091);">Port Charge</div>
<svg class="a" style="left:130.5px;top:818.5px;" width="14" height="14" viewBox="0 0 14 14"><circle cx="5.3" cy="4.9" r="4.75" fill="none" stroke="#555" stroke-width="1.25"/><line x1="8.7" y1="8.4" x2="12.6" y2="12.3" stroke="#555" stroke-width="1.6" stroke-linecap="round"/></svg>
<div class="t" style="top:820.20px;font-size:12.76px;line-height:12.76px;color:#3a3a3a;left:-146px;width:400px;text-align:right;transform-origin:100% 0;transform:scaleX(0.9091);">74,000.00</div>
<div class="t" style="top:820.20px;font-size:12.76px;line-height:12.76px;color:#444;left:262px;transform-origin:0 0;transform:scaleX(0.9091);">Others</div>
<svg class="a" style="left:379.5px;top:818.5px;" width="14" height="14" viewBox="0 0 14 14"><circle cx="5.3" cy="4.9" r="4.75" fill="none" stroke="#555" stroke-width="1.25"/><line x1="8.7" y1="8.4" x2="12.6" y2="12.3" stroke="#555" stroke-width="1.6" stroke-linecap="round"/></svg>
<div class="t" style="top:820.20px;font-size:12.76px;line-height:12.76px;color:#3a3a3a;left:103px;width:400px;text-align:right;transform-origin:100% 0;transform:scaleX(0.9091);">0.00</div>
<div class="t" style="top:692.68px;font-size:15.73px;line-height:15.73px;color:#9e4015;font-weight:bold;left:518.5px;transform-origin:0 0;transform:scaleX(0.9091);">Bunker Expense</div>
<div class="a" style="left:643px;top:689px;width:58px;height:21px;background:#fff;border:1px solid #d5d5d5;box-sizing:border-box;"></div>
<div class="t" style="top:694.29px;font-size:12.65px;line-height:12.65px;color:#333;font-weight:bold;left:643.0px;width:58px;text-align:center;transform-origin:50% 0;transform:scaleX(0.9091);">Recent</div>
<div class="a" style="left:704px;top:689px;width:115px;height:21px;background:#fff;border:1px solid #d5d5d5;box-sizing:border-box;"></div>
<svg class="a" style="left:713px;top:692px;" width="18" height="15" viewBox="0 0 18 15"><polyline points="2,2 9,6 16,1.5" fill="none" stroke="#4cb35a" stroke-width="1.2"/><polyline points="2,8 9,9 16,7.5" fill="none" stroke="#3d7fd0" stroke-width="1.2"/><polyline points="2,13 9,13 16,13.5" fill="none" stroke="#555" stroke-width="1.2"/><g fill="#fff" stroke-width="1"><circle cx="2" cy="2" r="1.3" stroke="#4cb35a"/><circle cx="9" cy="6" r="1.3" stroke="#4cb35a"/><circle cx="16" cy="1.8" r="1.3" stroke="#4cb35a"/><circle cx="2" cy="8" r="1.3" stroke="#3d7fd0"/><circle cx="9" cy="9" r="1.3" stroke="#3d7fd0"/><circle cx="16" cy="7.5" r="1.3" stroke="#3d7fd0"/><circle cx="2" cy="13" r="1.3" stroke="#555"/><circle cx="9" cy="13" r="1.3" stroke="#555"/><circle cx="16" cy="13.5" r="1.3" stroke="#555"/></g></svg>
<div class="t" style="top:694.29px;font-size:12.65px;line-height:12.65px;color:#333;font-weight:bold;left:735.5px;transform-origin:0 0;transform:scaleX(0.9091);">Bunker Index</div>
<div class="a" style="left:823.5px;top:690.5px;width:139.0px;height:19.0px;background:#fff;border:1px solid #d5d5d5;box-sizing:border-box;"></div>
<svg class="a" style="left:833px;top:692px;" width="11" height="15" viewBox="0 0 11 15"><path d="M5.5 0.5 C5.5 0.5 1 6.5 1 10 C1 12.8 3 14.5 5.5 14.5 C8 14.5 10 12.8 10 10 C10 6.5 5.5 0.5 5.5 0.5 Z" fill="#5f5f5f"/></svg>
<div class="t" style="top:694.29px;font-size:12.65px;line-height:12.65px;color:#333;font-weight:bold;left:852.5px;transform-origin:0 0;transform:scaleX(0.9091);">Bunker Simulator</div>
<svg class="a" style="left:800px;top:680px;" width="180" height="40" viewBox="0 0 180 40"><rect x="22" y="9.5" width="141.5" height="21" fill="none" stroke="#ff0000" stroke-width="2" stroke-dasharray="6 2"/></svg>
<div class="a" style="left:518px;top:713px;width:441px;height:20px;background:#f3f3f3;"></div>
<div class="a" style="left:518px;top:733px;width:86px;height:21px;background:#f3f3f3;"></div>
<div class="a" style="left:723px;top:733px;width:236px;height:21px;background:#fffde2;"></div>
<div class="a" style="left:518px;top:754px;width:86px;height:20px;background:#f3f3f3;"></div>
<div class="a" style="left:723px;top:754px;width:236px;height:20px;background:#fffde2;"></div>
<div class="a" style="left:518px;top:774px;width:86px;height:21px;background:#f3f3f3;"></div>
<div class="a" style="left:723px;top:774px;width:236px;height:21px;background:#fffde2;"></div>
<div class="a" style="left:518px;top:795px;width:441px;height:41px;background:#f0f4fd;"></div>
<div class="a" style="left:518px;top:713px;width:442px;height:1px;background:#dedede;"></div>
<div class="a" style="left:518px;top:733px;width:442px;height:1px;background:#dedede;"></div>
<div class="a" style="left:518px;top:754px;width:442px;height:1px;background:#dedede;"></div>
<div class="a" style="left:518px;top:774px;width:442px;height:1px;background:#dedede;"></div>
<div class="a" style="left:518px;top:795px;width:442px;height:1px;background:#dedede;"></div>
<div class="a" style="left:518px;top:815px;width:442px;height:1px;background:#dedede;"></div>
<div class="a" style="left:518px;top:836px;width:442px;height:1px;background:#dedede;"></div>
<div class="a" style="left:518px;top:713px;width:1px;height:124px;background:#dedede;"></div>
<div class="a" style="left:604px;top:713px;width:1px;height:124px;background:#dedede;"></div>
<div class="a" style="left:723px;top:713px;width:1px;height:124px;background:#dedede;"></div>
<div class="a" style="left:840px;top:713px;width:1px;height:124px;background:#dedede;"></div>
<div class="a" style="left:959px;top:713px;width:1px;height:124px;background:#dedede;"></div>
<div class="t" style="top:717.79px;font-size:12.65px;line-height:12.65px;color:#444;left:604.0px;width:119px;text-align:center;transform-origin:50% 0;transform:scaleX(0.9091);">Price / MT</div>
<div class="t" style="top:717.79px;font-size:12.65px;line-height:12.65px;color:#444;left:723.0px;width:117px;text-align:center;transform-origin:50% 0;transform:scaleX(0.9091);">Consumption</div>
<div class="t" style="top:717.79px;font-size:12.65px;line-height:12.65px;color:#444;left:840.0px;width:119px;text-align:center;transform-origin:50% 0;transform:scaleX(0.9091);">Expense</div>
<div class="t" style="top:738.20px;font-size:12.76px;line-height:12.76px;color:#444;left:523px;transform-origin:0 0;transform:scaleX(0.9091);">VLSFO</div>
<div class="t" style="top:738.20px;font-size:12.76px;line-height:12.76px;color:#3a3a3a;left:318.5px;width:400px;text-align:right;transform-origin:100% 0;transform:scaleX(0.9091);">490.00</div>
<div class="t" style="top:738.20px;font-size:12.76px;line-height:12.76px;color:#3a3a3a;left:436px;width:400px;text-align:right;transform-origin:100% 0;transform:scaleX(0.9091);">657.57</div>
<div class="t" style="top:738.20px;font-size:12.76px;line-height:12.76px;color:#3a3a3a;left:555px;width:400px;text-align:right;transform-origin:100% 0;transform:scaleX(0.9091);">322,209.30</div>
<div class="t" style="top:758.70px;font-size:12.76px;line-height:12.76px;color:#444;left:523px;transform-origin:0 0;transform:scaleX(0.9091);">MGO</div>
<div class="t" style="top:758.70px;font-size:12.76px;line-height:12.76px;color:#3a3a3a;left:318.5px;width:400px;text-align:right;transform-origin:100% 0;transform:scaleX(0.9091);">700.00</div>
<div class="t" style="top:758.70px;font-size:12.76px;line-height:12.76px;color:#3a3a3a;left:436px;width:400px;text-align:right;transform-origin:100% 0;transform:scaleX(0.9091);">3.30</div>
<div class="t" style="top:758.70px;font-size:12.76px;line-height:12.76px;color:#3a3a3a;left:555px;width:400px;text-align:right;transform-origin:100% 0;transform:scaleX(0.9091);">2,308.68</div>
<div class="t" style="top:779.20px;font-size:12.76px;line-height:12.76px;color:#444;left:523px;transform-origin:0 0;transform:scaleX(0.9091);">ULSFO</div>
<div class="t" style="top:779.20px;font-size:12.76px;line-height:12.76px;color:#3a3a3a;left:318.5px;width:400px;text-align:right;transform-origin:100% 0;transform:scaleX(0.9091);">750.00</div>
<div class="t" style="top:779.20px;font-size:12.76px;line-height:12.76px;color:#3a3a3a;left:436px;width:400px;text-align:right;transform-origin:100% 0;transform:scaleX(0.9091);">140.04</div>
<div class="t" style="top:779.20px;font-size:12.76px;line-height:12.76px;color:#3a3a3a;left:555px;width:400px;text-align:right;transform-origin:100% 0;transform:scaleX(0.9091);">105,026.99</div>
<div class="t" style="top:692.18px;font-size:15.73px;line-height:15.73px;color:#9e4015;font-weight:bold;left:970px;transform-origin:0 0;transform:scaleX(0.9091);">Result</div>
<div class="a" style="left:1189.5px;top:689px;width:101.0px;height:21px;background:#fff;border:1px solid #d5d5d5;box-sizing:border-box;"></div>
<svg class="a" style="left:1199px;top:692px;" width="16" height="15" viewBox="0 0 16 15"><rect x="2" y="0.5" width="2" height="6" fill="#4cb35a"/><rect x="0" y="2.5" width="6" height="2" fill="#4cb35a"/><g fill="#555"><rect x="8" y="1" width="7" height="1.2"/><rect x="10" y="4" width="5" height="1"/><rect x="10" y="6.5" width="5" height="1"/><rect x="10" y="9" width="5" height="1"/><rect x="10" y="11.5" width="5" height="1"/><rect x="8" y="13.5" width="7" height="1.2"/></g></svg>
<div class="t" style="top:694.29px;font-size:12.65px;line-height:12.65px;color:#333;font-weight:bold;left:1220px;transform-origin:0 0;transform:scaleX(0.9091);">Result Plus</div>
<div class="a" style="left:1293px;top:689px;width:89.5px;height:21px;background:#fff;border:1px solid #d5d5d5;box-sizing:border-box;"></div>
<svg class="a" style="left:1303px;top:692px;" width="17" height="15" viewBox="0 0 17 15"><g fill="#aaa"><rect x="0" y="1" width="2" height="1.5"/><rect x="3" y="1" width="9" height="1.5"/><rect x="0" y="7" width="2" height="1.5"/><rect x="3" y="7" width="6" height="1.5"/><rect x="0" y="10" width="2" height="1.5"/><rect x="3" y="10" width="6" height="1.5"/></g><rect x="0" y="4" width="2" height="1.5" fill="#3d7fd0"/><rect x="3" y="4" width="9" height="1.5" fill="#3d7fd0"/><rect x="10" y="8" width="7" height="7" fill="#4cb35a"/><rect x="11.5" y="9.5" width="4" height="4" fill="#fff"/></svg>
<div class="t" style="top:694.29px;font-size:12.65px;line-height:12.65px;color:#333;font-weight:bold;left:1325px;transform-origin:0 0;transform:scaleX(0.9091);">Analyzer</div>
<div class="a" style="left:1386px;top:689px;width:83.5px;height:21px;background:#fff;border:1px solid #d5d5d5;box-sizing:border-box;"></div>
<svg class="a" style="left:1397px;top:691px;" width="16" height="16" viewBox="0 0 16 16"><path d="M10 1 L1 1 L1 15 L12 15 L12 9" fill="none" stroke="#555" stroke-width="1.3"/><path d="M5 11 L5.8 8 L12.5 1.3 L14.7 3.5 L8 10.2 Z" fill="#3d7fd0"/></svg>
<div class="t" style="top:694.29px;font-size:12.65px;line-height:12.65px;color:#333;font-weight:bold;left:1419px;transform-origin:0 0;transform:scaleX(0.9091);">Remark</div>
<div class="a" style="left:971px;top:713px;width:118px;height:20px;background:#f3f3f3;"></div>
<div class="a" style="left:1089px;top:713px;width:131px;height:20px;background:#fff;"></div>
<div class="a" style="left:971px;top:733px;width:118px;height:21px;background:#f3f3f3;"></div>
<div class="a" style="left:1089px;top:733px;width:131px;height:21px;background:#fff;"></div>
<div class="a" style="left:971px;top:754px;width:118px;height:20px;background:#f3f3f3;"></div>
<div class="a" style="left:1089px;top:754px;width:131px;height:20px;background:#fffde2;"></div>
<div class="a" style="left:971px;top:774px;width:118px;height:21px;background:#f3f3f3;"></div>
<div class="a" style="left:1089px;top:774px;width:131px;height:21px;background:#fffde2;"></div>
<div class="a" style="left:971px;top:713px;width:250px;height:1px;background:#dedede;"></div>
<div class="a" style="left:971px;top:733px;width:250px;height:1px;background:#dedede;"></div>
<div class="a" style="left:971px;top:754px;width:250px;height:1px;background:#dedede;"></div>
<div class="a" style="left:971px;top:774px;width:250px;height:1px;background:#dedede;"></div>
<div class="a" style="left:971px;top:795px;width:250px;height:1px;background:#dedede;"></div>
<div class="a" style="left:971px;top:713px;width:1px;height:83px;background:#dedede;"></div>
<div class="a" style="left:1089px;top:713px;width:1px;height:83px;background:#dedede;"></div>
<div class="a" style="left:1220px;top:713px;width:1px;height:83px;background:#dedede;"></div>
<div class="t" style="top:717.70px;font-size:12.76px;line-height:12.76px;color:#444;left:975px;transform-origin:0 0;transform:scaleX(0.9091);">Hire / Day</div>
<svg class="a" style="left:1092px;top:716.5px;" width="14" height="14" viewBox="0 0 14 14"><circle cx="5.3" cy="4.9" r="4.75" fill="none" stroke="#555" stroke-width="1.25"/><line x1="8.7" y1="8.4" x2="12.6" y2="12.3" stroke="#555" stroke-width="1.6" stroke-linecap="round"/></svg>
<div class="t" style="top:717.70px;font-size:12.76px;line-height:12.76px;color:#3a3a3a;left:816px;width:400px;text-align:right;transform-origin:100% 0;transform:scaleX(0.9091);">0.00</div>
<div class="t" style="top:738.20px;font-size:12.76px;line-height:12.76px;color:#444;left:975px;transform-origin:0 0;transform:scaleX(0.9091);">H/Add. Comm.</div>
<div class="t" style="top:738.20px;font-size:12.76px;line-height:12.76px;color:#3a3a3a;left:816px;width:400px;text-align:right;transform-origin:100% 0;transform:scaleX(0.9091);">3.75 %</div>
<div class="t" style="top:758.70px;font-size:12.76px;line-height:12.76px;color:#444;left:975px;transform-origin:0 0;transform:scaleX(0.9091);">Net Hire</div>
<div class="t" style="top:758.70px;font-size:12.76px;line-height:12.76px;color:#3a3a3a;left:816px;width:400px;text-align:right;transform-origin:100% 0;transform:scaleX(0.9091);">0.00</div>
<div class="t" style="top:779.20px;font-size:12.76px;line-height:12.76px;color:#444;left:975px;transform-origin:0 0;transform:scaleX(0.9091);">C/Base</div>
<svg class="a" style="left:1092px;top:777.5px;" width="14" height="14" viewBox="0 0 14 14"><circle cx="5.3" cy="4.9" r="4.75" fill="none" stroke="#555" stroke-width="1.25"/><line x1="8.7" y1="8.4" x2="12.6" y2="12.3" stroke="#555" stroke-width="1.6" stroke-linecap="round"/></svg>
<div class="t" style="top:779.20px;font-size:12.76px;line-height:12.76px;color:#3a3a3a;left:816px;width:400px;text-align:right;transform-origin:100% 0;transform:scaleX(0.9091);">937.84</div>
<div class="a" style="left:1220px;top:713px;width:118px;height:20px;background:#f3f3f3;"></div>
<div class="a" style="left:1338px;top:713px;width:131px;height:20px;background:#fffde2;"></div>
<div class="a" style="left:1220px;top:733px;width:118px;height:21px;background:#f3f3f3;"></div>
<div class="a" style="left:1338px;top:733px;width:131px;height:21px;background:#fffde2;"></div>
<div class="a" style="left:1220px;top:754px;width:118px;height:20px;background:#f3f3f3;"></div>
<div class="a" style="left:1338px;top:754px;width:131px;height:20px;background:#fffde2;"></div>
<div class="a" style="left:1220px;top:774px;width:118px;height:21px;background:#f3f3f3;"></div>
<div class="a" style="left:1338px;top:774px;width:131px;height:21px;background:#fffde2;"></div>
<div class="a" style="left:1220px;top:795px;width:118px;height:20px;background:#f3f3f3;"></div>
<div class="a" style="left:1338px;top:795px;width:131px;height:20px;background:#fffde2;"></div>
<div class="a" style="left:1220px;top:815px;width:118px;height:21px;background:#f3f3f3;"></div>
<div class="a" style="left:1338px;top:815px;width:131px;height:21px;background:#fffde2;"></div>
<div class="a" style="left:1220px;top:713px;width:250px;height:1px;background:#dedede;"></div>
<div class="a" style="left:1220px;top:733px;width:250px;height:1px;background:#dedede;"></div>
<div class="a" style="left:1220px;top:754px;width:250px;height:1px;background:#dedede;"></div>
<div class="a" style="left:1220px;top:774px;width:250px;height:1px;background:#dedede;"></div>
<div class="a" style="left:1220px;top:795px;width:250px;height:1px;background:#dedede;"></div>
<div class="a" style="left:1220px;top:815px;width:250px;height:1px;background:#dedede;"></div>
<div class="a" style="left:1220px;top:836px;width:250px;height:1px;background:#dedede;"></div>
<div class="a" style="left:1220px;top:713px;width:1px;height:124px;background:#dedede;"></div>
<div class="a" style="left:1338px;top:713px;width:1px;height:124px;background:#dedede;"></div>
<div class="a" style="left:1469px;top:713px;width:1px;height:124px;background:#dedede;"></div>
<div class="t" style="top:717.70px;font-size:12.76px;line-height:12.76px;color:#444;left:1224px;transform-origin:0 0;transform:scaleX(0.9091);">Revenue</div>
<div class="t" style="top:717.70px;font-size:12.76px;line-height:12.76px;color:#333;left:1065px;width:400px;text-align:right;transform-origin:100% 0;transform:scaleX(0.9091);">577,500.00</div>
<div class="t" style="top:738.20px;font-size:12.76px;line-height:12.76px;color:#444;left:1224px;transform-origin:0 0;transform:scaleX(0.9091);">Op. Expense</div>
<div class="t" style="top:738.20px;font-size:12.76px;line-height:12.76px;color:#333;left:1065px;width:400px;text-align:right;transform-origin:100% 0;transform:scaleX(0.9091);">546,569.03</div>
<div class="t" style="top:758.70px;font-size:12.76px;line-height:12.76px;color:#444;left:1224px;transform-origin:0 0;transform:scaleX(0.9091);">Op. Profit</div>
<div class="t" style="top:758.70px;font-size:12.76px;line-height:12.76px;color:#333;left:1065px;width:400px;text-align:right;transform-origin:100% 0;transform:scaleX(0.9091);">30,930.97</div>
<div class="t" style="top:779.20px;font-size:12.76px;line-height:12.76px;color:#444;left:1224px;transform-origin:0 0;transform:scaleX(0.9091);">Total Hire</div>
<div class="t" style="top:779.20px;font-size:12.76px;line-height:12.76px;color:#333;left:1065px;width:400px;text-align:right;transform-origin:100% 0;transform:scaleX(0.9091);">0.00</div>
<div class="t" style="top:799.70px;font-size:12.76px;line-height:12.76px;color:#444;left:1224px;transform-origin:0 0;transform:scaleX(0.9091);">Total Expense</div>
<div class="t" style="top:799.70px;font-size:12.76px;line-height:12.76px;color:#333;left:1065px;width:400px;text-align:right;transform-origin:100% 0;transform:scaleX(0.9091);">546,569.03</div>
<div class="t" style="top:820.20px;font-size:12.76px;line-height:12.76px;color:#333;font-weight:bold;left:1224px;transform-origin:0 0;transform:scaleX(0.9091);">PROFIT (USD)</div>
<div class="t" style="top:820.20px;font-size:12.76px;line-height:12.76px;color:#333;font-weight:bold;left:1065px;width:400px;text-align:right;transform-origin:100% 0;transform:scaleX(0.9091);">30,930.97</div>
<div class="a" style="left:2px;top:946.5px;width:1498px;height:29.5px;background:#2b579a;"></div>
<div class="t" style="top:956.29px;font-size:12.65px;line-height:12.65px;color:#ffffff;left:16.8px;transform-origin:0 0;transform:scaleX(0.9091);">Reset</div>
<div class="a" style="left:59px;top:960px;width:8px;height:2px;background:#4a4a4a;"></div>
<div class="a" style="left:70.5px;top:959px;width:116px;height:5px;background:#fff;border:1px solid #9a9a9a;box-sizing:border-box;border-radius:1px;"></div>
<div class="a" style="left:92.3px;top:954.6px;width:6.5px;height:13.6px;background:#444;border:1px solid #fff;box-sizing:border-box;"></div>
<div class="a" style="left:190px;top:960px;width:8px;height:2px;background:#4a4a4a;"></div>
<div class="a" style="left:193px;top:957px;width:2px;height:8px;background:#4a4a4a;"></div>
<div class="t" style="top:956.29px;font-size:12.65px;line-height:12.65px;color:#ffffff;left:-153px;width:400px;text-align:right;transform-origin:100% 0;transform:scaleX(0.9091);">100 %</div>
<div class="a" style="left:254.5px;top:949px;width:1px;height:26px;background:#6f8fc2;"></div>
<div class="a" style="left:497px;top:949px;width:1px;height:26px;background:#6f8fc2;"></div>
<div class="a" style="left:841.5px;top:949px;width:1px;height:26px;background:#6f8fc2;"></div>
<div class="a" style="left:1187.5px;top:949px;width:1px;height:26px;background:#6f8fc2;"></div>
<div class="t" style="top:956.48px;font-size:12.43px;line-height:12.43px;color:#ffffff;left:255.75px;width:240px;text-align:center;transform-origin:50% 0;transform:scaleX(0.9091);">Great Circle Line</div>
<div class="t" style="top:956.48px;font-size:12.43px;line-height:12.43px;color:#ffffff;left:499.25px;width:340px;text-align:center;transform-origin:50% 0;transform:scaleX(0.9091);">Anti Piracy : JWLA032 (18th Dec 2023)</div>
<div class="t" style="top:956.48px;font-size:12.43px;line-height:12.43px;color:#ffffff;left:844.5px;width:340px;text-align:center;transform-origin:50% 0;transform:scaleX(0.9091);">ECA : IMO, Mediterranean, Each Country</div>
<div class="t" style="top:956.48px;font-size:12.43px;line-height:12.43px;color:#ffffff;left:1190.5px;width:240px;text-align:center;transform-origin:50% 0;transform:scaleX(0.9091);">Main Currency : USD</div>
<svg class="a" style="left:1488px;top:965px;" width="10" height="10" viewBox="0 0 10 10"><g fill="#9fb6da"><rect x="7" y="1" width="1.5" height="1.5"/><rect x="4.5" y="3.5" width="1.5" height="1.5"/><rect x="7" y="3.5" width="1.5" height="1.5"/><rect x="2" y="6" width="1.5" height="1.5"/><rect x="4.5" y="6" width="1.5" height="1.5"/><rect x="7" y="6" width="1.5" height="1.5"/></g></svg>
<svg class="a" style="left:0px;top:0px;pointer-events:none;" width="1502" height="978" viewBox="0 0 1502 978">
    <line x1="687" y1="360.5" x2="270" y2="138.5" stroke="#000" stroke-width="2"/>
    <path d="M260.5 133.5 L274.8 134.3 L269.2 144.9 Z" fill="#000"/>
    <line x1="831.1" y1="402" x2="890.5" y2="678" stroke="#000" stroke-width="2"/>
    <path d="M892.8 689.1 L883.7 677.8 L896.5 675 Z" fill="#000"/></svg>
<div class="a" style="left:686px;top:320.5px;width:290px;height:82px;background:#6e96c8;border:2px solid #151515;box-sizing:border-box;"></div>
<div class="t" style="top:339.49px;font-size:20.69px;line-height:20.69px;color:#0a0a0a;left:701.5px;transform-origin:0 0;transform:scaleX(1.0684);">Click ‘EU ETS &amp; FuelEU’</div>
<div class="t" style="top:363.98px;font-size:20.70px;line-height:20.70px;color:#0a0a0a;left:701.5px;transform-origin:0 0;transform:scaleX(1.1521);">or ‘Bunker Simulator’.</div>
<div class="a" style="left:669.5px;top:302.5px;width:35.5px;height:35.5px;background:#779ed0;border:1.5px solid #3f4652;border-radius:50%;box-sizing:border-box;"></div>
<div class="t" style="top:311.42px;font-size:19.00px;line-height:19.00px;color:#fff;left:672.3px;width:30px;text-align:center;transform-origin:50% 0;">1</div>
</body></html>
